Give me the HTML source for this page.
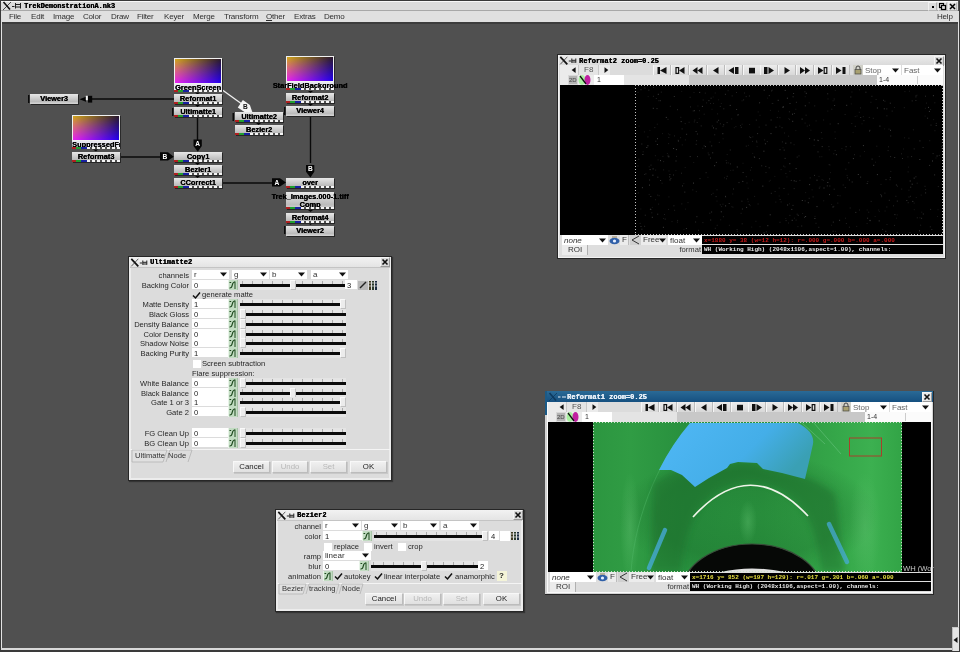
<!DOCTYPE html>
<html><head><meta charset="utf-8">
<style>
*{margin:0;padding:0;box-sizing:border-box}
html,body{width:960px;height:652px;overflow:hidden;background:#505050;font-family:"Liberation Sans",sans-serif;position:relative}
body{will-change:transform}
.a{position:absolute}
.t{position:absolute;white-space:nowrap;line-height:1}
.mono{font-family:"Liberation Mono",monospace}
/* menubar */
.mi{position:absolute;top:13px;font-size:8px;letter-spacing:-0.2px;color:#2e2e2e;line-height:8px}
/* nodes */
.node{position:absolute;width:48px;height:10px;background:linear-gradient(#e8e8e8 0%,#d0d0d0 40%,#bcbcbc 75%,#d8d8d8 100%);box-shadow:1px 1px 0 #262626;font-weight:bold;font-size:7.4px;line-height:10px;text-align:center;color:#000;white-space:nowrap;text-shadow:0.3px 0 0 #000}
.ch{position:absolute;left:0;bottom:0;width:48px;height:2px;background:
linear-gradient(to right,#b02020 0,#b02020 4px,#20a030 4px,#20a030 9px,#1820a0 9px,#1820a0 15px,transparent 15px),
repeating-linear-gradient(to right,#f4f4f4 0,#f4f4f4 3px,#505050 3px,#505050 5px)}
.thumb{position:absolute;width:48px;height:26px;border:1px solid #f0f0f0;
background:linear-gradient(to bottom,rgba(0,0,0,0),rgba(0,0,0,0)),
linear-gradient(to right,#e82020,#000 95%),
linear-gradient(to bottom,#000 0%,#0000f0 100%);background-blend-mode:normal,screen}
.thumbg{position:absolute;left:0;top:0;width:100%;height:100%;background:radial-gradient(ellipse 120% 140% at 0 0,rgba(0,200,0,1) 0%,rgba(0,0,0,0) 80%);mix-blend-mode:screen}
.lbl{position:absolute;font-weight:bold;font-size:7.4px;line-height:7px;color:#000;white-space:nowrap;text-align:center;text-shadow:0.3px 0 0 #000}
/* windows */
.win{position:absolute;background:#dcdcdc;border:1px solid #222}
.wt{position:absolute;left:0;top:0;right:0;height:10px;background:linear-gradient(#f0f0f0,#d8d8d8)}
.wtt{position:absolute;top:1px;font-family:"Liberation Mono",monospace;font-weight:bold;font-size:7.5px;line-height:8px;color:#111}
.xb{position:absolute;width:10px;height:10px;background:#d4d4d4;border:1px solid #888;color:#111;font-size:9px;line-height:8px;text-align:center;font-weight:bold}
.lab{position:absolute;font-size:8px;color:#333;line-height:8px;white-space:nowrap;text-align:right}
.inp{position:absolute;height:9px;background:#fff;font-size:8px;line-height:9px;color:#222;padding-left:1px}
.ani{position:absolute;width:8px;height:9px;background:#bfe0bf;border:1px solid #a0c0a0}
.sl{position:absolute;height:9px}
.btn{position:absolute;height:11px;background:linear-gradient(#f4f4f4,#dcdcdc);border:1px solid #bbb;border-right-color:#999;border-bottom-color:#999;font-size:8px;line-height:9px;text-align:center;color:#222}
</style></head><body>

<!-- ============ main title bar ============ -->
<div class="a" style="left:0;top:0;width:960px;height:1px;background:#3a3a3a"></div>
<div class="a" style="left:0;top:1px;width:958px;height:10px;background:#dcdcdc;border-top:1px solid #f8f8f8;border-bottom:1px solid #a8a8a8"></div>
<div class="a" style="left:0;top:0;width:1px;height:652px;background:#3a3a3a"></div>
<svg class="a" style="left:1px;top:1px" width="22" height="10" viewBox="0 0 22 10">
 <path d="M2.5 1 L9 8.5" stroke="#111" stroke-width="1.6" fill="none"/>
 <path d="M10 1 L2 9" stroke="#222" stroke-width="0.8" fill="none"/>
 <path d="M11 5.5 H13.5" stroke="#222" stroke-width="1" fill="none"/>
 <path d="M14.5 2 V7.5 M19.5 2 V7.5 M14.5 3.5 H19.5 M14.5 6 H19.5" stroke="#222" stroke-width="1" fill="none"/>
</svg>
<div class="t mono" style="left:24px;top:2px;font-size:6.9px;font-weight:bold;color:#000;line-height:9px;text-shadow:0.35px 0 0 #000">TrekDemonstrationA.nk3</div>
<div class="a" style="left:928px;top:2px;width:9px;height:9px;border:1px solid #b4b4b4;border-top-color:#f0f0f0;border-left-color:#f0f0f0;background:#dcdcdc"><div class="a" style="left:3px;top:3px;width:2px;height:2px;background:#000"></div></div>
<div class="a" style="left:938px;top:2px;width:9px;height:9px;border:1px solid #b4b4b4;border-top-color:#f0f0f0;border-left-color:#f0f0f0;background:#dcdcdc"></div><svg class="a" style="left:938px;top:2px" width="9" height="9"><rect x="1.5" y="1.5" width="4" height="4" fill="none" stroke="#000" stroke-width="1.2"/><rect x="3.5" y="3.5" width="4" height="4" fill="#dcdcdc" stroke="#000" stroke-width="1.2"/></svg>
<div class="a" style="left:948px;top:2px;width:9px;height:9px;border:1px solid #b4b4b4;border-top-color:#f0f0f0;border-left-color:#f0f0f0;background:#dcdcdc"></div><svg class="a" style="left:948px;top:2px" width="9" height="9"><path d="M2 2 L7 7 M7 2 L2 7" stroke="#000" stroke-width="1.5"/></svg>

<!-- ============ menubar ============ -->
<div class="a" style="left:1px;top:11px;width:957px;height:11px;background:#e0e0e0"></div>
<div class="mi" style="left:9px">File</div>
<div class="mi" style="left:31px">Edit</div>
<div class="mi" style="left:53px">Image</div>
<div class="mi" style="left:83px">Color</div>
<div class="mi" style="left:111px">Draw</div>
<div class="mi" style="left:137px">Filter</div>
<div class="mi" style="left:164px">Keyer</div>
<div class="mi" style="left:193px">Merge</div>
<div class="mi" style="left:224px">Transform</div>
<div class="mi" style="left:266px"><u>O</u>ther</div>
<div class="mi" style="left:294px">Extras</div>
<div class="mi" style="left:324px">Demo</div>
<div class="mi" style="left:937px">Help</div>

<div class="a" style="left:2px;top:22px;width:956px;height:2px;background:#3c3c3c"></div>
<!-- right & bottom frame -->
<div class="a" style="left:1px;top:22px;width:1px;height:628px;background:#e4e4e4"></div>
<div class="a" style="left:958px;top:11px;width:1px;height:641px;background:#e0e0e0"></div>
<div class="a" style="left:959px;top:0;width:1px;height:652px;background:#3a3a3a"></div>
<div class="a" style="left:1px;top:648px;width:958px;height:2px;background:#d8d8d8"></div>
<div class="a" style="left:0;top:650px;width:960px;height:2px;background:#3a3a3a"></div>
<div class="a" style="left:952px;top:627px;width:7px;height:24px;background:#e4e4e4;border-left:1px solid #bbb;border-top:1px solid #c8c8c8"></div>
<svg class="a" style="left:952px;top:636px" width="7" height="8"><path d="M1.5 4 L5.5 1 V7Z" fill="#111"/></svg>


<!-- ============ node graph ============ -->
<svg class="a" style="left:0;top:0" width="0" height="0">
<defs>
 <linearGradient id="tgt" x1="0" x2="1"><stop offset="0" stop-color="#d0a818"/><stop offset="1" stop-color="#281828"/></linearGradient>
 <linearGradient id="tgb" x1="0" x2="1"><stop offset="0" stop-color="#e820f0"/><stop offset="1" stop-color="#2000f0"/></linearGradient>
 <linearGradient id="tgm" x1="0" y1="0" x2="0" y2="1"><stop offset="0" stop-color="#fff"/><stop offset="1" stop-color="#000"/></linearGradient>
 <mask id="tmask"><rect width="48" height="26" fill="url(#tgm)"/></mask>
</defs></svg>
<svg class="a" style="left:0;top:0" width="960" height="652">
 <g stroke="#0a0a0a" stroke-width="1.4" fill="none">
  <path d="M92 99 H174"/>
  <path d="M197.5 118 V140"/>
  <path d="M121 157 H161"/>
  <path d="M223 183 H272"/>
  <path d="M310.5 117 V163"/>
 </g>
 <path d="M221 89 L246 107" stroke="#f0f0f0" stroke-width="1.3" fill="none"/>
 <g fill="#050505">
  <path d="M79.5 99.3 L86 96.8 V101.8 Z"/>
  <rect x="88" y="95.8" width="4.2" height="6.8"/>
  <path d="M160 152.3 H168 L173.8 156.8 L168 160.5 H160 Z"/>
  <path d="M272 178.3 H280 L286 182.5 L280 186.6 H272 Z"/>
  <path d="M306 165 H314.3 V171.7 L310.4 177.4 L306 171.7 Z"/>
  <path d="M193.5 139.5 H201.8 V146 L197.8 151.8 L193.5 146 Z"/>
 </g>
 <rect x="85.8" y="95.8" width="2" height="4.4" fill="#f4f4f4"/>
 <g transform="translate(252.3 112) rotate(34.4)"><path d="M-14.5 -4.5 H-6 L0 0 L-6 4.5 H-14.5 Z" fill="#f4f4f4"/></g>
 <g fill="#fff" font-family="Liberation Sans" font-weight="bold" font-size="6.6">
  <text x="165" y="158.6" text-anchor="middle">B</text>
  <text x="197.6" y="145.5" text-anchor="middle">A</text>
  <text x="277" y="184.6" text-anchor="middle">A</text>
  <text x="310.3" y="171.2" text-anchor="middle">B</text>
  <text x="245.3" y="109.2" text-anchor="middle" fill="#111">B</text>
 </g>
 <g fill="#0a0a0a">
  <rect x="28" y="95" width="1.5" height="8"/>
  <rect x="172" y="108" width="1.5" height="8"/>
  <rect x="232.5" y="113" width="1.5" height="8"/>
  <rect x="284" y="107" width="1.5" height="8"/>
  <rect x="284" y="226" width="1.5" height="8"/>
 </g>
 <g fill="#050505">
  <path d="M195 92.5 H200 L197.5 94.5Z M195 105 H200 L197.5 107Z M195 163 H200 L197.5 165Z M195 176 H200 L197.5 178Z"/>
  <path d="M93 149.5 H98 L96 151.5Z"/>
  <path d="M256 123 H261 L258.5 125Z"/>
  <path d="M308 91 H313 L310.5 93Z M308 104 H313 L310.5 106Z"/>
  <path d="M308 210 H313 L310.5 212Z M308 223 H313 L310.5 225Z"/>
 </g>
</svg>
<div class="node" style="left:30px;top:94px;height:10px">Viewer3</div><div class="a" style="left:174px;top:58px;width:48px;height:26px;background:#f0f0f0;box-shadow:1px 1px 0 #2a2a2a"></div><svg class="a" style="left:175px;top:59px" width="46" height="24" viewBox="0 0 48 26" preserveAspectRatio="none"><rect width="48" height="26" fill="url(#tgb)"/><rect width="48" height="26" fill="url(#tgt)" mask="url(#tmask)"/></svg><div class="a" style="left:174px;top:84px;width:48px;height:7px;background:#e8e8f0;box-shadow:1px 1px 0 #2a2a2a"></div><div class="lbl" style="left:174px;top:84px;width:48px;overflow:visible">GreenScreen</div><div class="ch" style="left:174px;top:90px;bottom:auto"></div><div class="node" style="left:174px;top:94px;height:10px">Reformat1<div class="ch"></div></div><div class="node" style="left:174px;top:107px;height:10px">Ultimatte1<div class="ch"></div></div><div class="node" style="left:174px;top:152px;height:10px">Copy1<div class="ch"></div></div><div class="node" style="left:174px;top:165px;height:10px">Bezier1<div class="ch"></div></div><div class="node" style="left:174px;top:178px;height:10px">CCorrect1<div class="ch"></div></div><div class="a" style="left:72px;top:115px;width:48px;height:26px;background:#f0f0f0;box-shadow:1px 1px 0 #2a2a2a"></div><svg class="a" style="left:73px;top:116px" width="46" height="24" viewBox="0 0 48 26" preserveAspectRatio="none"><rect width="48" height="26" fill="url(#tgb)"/><rect width="48" height="26" fill="url(#tgt)" mask="url(#tmask)"/></svg><div class="a" style="left:72px;top:141px;width:48px;height:7px;background:#e8e8f0;box-shadow:1px 1px 0 #2a2a2a"></div><div class="lbl" style="left:72px;top:141px;width:48px;overflow:visible"><span style="display:inline-block;width:48px;overflow:hidden">SuppressedFr</span></div><div class="ch" style="left:72px;top:147px;bottom:auto"></div><div class="node" style="left:72px;top:152px;height:10px">Reformat3<div class="ch"></div></div><div class="node" style="left:235px;top:112px;height:10px">Ultimatte2<div class="ch"></div></div><div class="node" style="left:235px;top:125px;height:10px">Bezier2<div class="ch"></div></div><div class="a" style="left:286px;top:56px;width:48px;height:26px;background:#f0f0f0;box-shadow:1px 1px 0 #2a2a2a"></div><svg class="a" style="left:287px;top:57px" width="46" height="24" viewBox="0 0 48 26" preserveAspectRatio="none"><rect width="48" height="26" fill="url(#tgb)"/><rect width="48" height="26" fill="url(#tgt)" mask="url(#tmask)"/></svg><div class="a" style="left:286px;top:82px;width:48px;height:7px;background:#e8e8f0;box-shadow:1px 1px 0 #2a2a2a"></div><div class="lbl" style="left:266px;top:82px;width:88px;overflow:visible">StarFieldBackground</div><div class="ch" style="left:286px;top:88px;bottom:auto"></div><div class="node" style="left:286px;top:93px;height:10px">Reformat2<div class="ch"></div></div><div class="node" style="left:286px;top:106px;height:10px">Viewer4</div><div class="node" style="left:286px;top:178px;height:10px">over<div class="ch"></div></div><div class="node" style="left:286px;top:192px;height:17px;padding-top:8px">Comp<div class="ch"></div></div><div class="lbl" style="left:262px;top:193px;width:96px">Trek_Images.000-1.tiff</div><div class="node" style="left:286px;top:213px;height:10px">Reformat4<div class="ch"></div></div><div class="node" style="left:286px;top:226px;height:10px">Viewer2</div>
<!-- ============ Reformat2 viewer ============ -->
<div class="a" style="left:557px;top:54px;width:389px;height:205px;background:#262626"></div><div class="a" style="left:558px;top:55px;width:387px;height:203px;background:#f2f2f2"></div><div class="a" style="left:559px;top:55px;width:386px;height:10px;background:linear-gradient(#ececec,#dadada)"></div><div class="a" style="left:559px;top:65px;width:385px;height:192px;background:#dedede"></div><svg class="a" style="left:559px;top:56px" width="22" height="10" viewBox="0 0 22 10"><path d="M1.3 0.8 L8.3 8.3" stroke="#111" stroke-width="1.7" fill="none"/><path d="M8.3 0.8 L1.3 8.3" stroke="#222" stroke-width="0.7" fill="none"/><path d="M9.8 5 H12" stroke="#222" stroke-width="1" fill="none"/><path d="M12.8 2.5 V6.8 M16.8 2.5 V6.8 M12.8 4.3 H16.8 M12.8 6 H16.8" stroke="#222" stroke-width="1" fill="none"/></svg><div class="t mono" style="left:579px;top:57px;font-size:7px;font-weight:bold;line-height:9px;color:#000;text-shadow:0.35px 0 0 #000">Reformat2 zoom=0.25</div><div class="a" style="left:934px;top:56px;width:10px;height:10px;background:#d8d8d8;border:1px solid #999;border-top-color:#f4f4f4;border-left-color:#f4f4f4"></div>
<svg class="a" style="left:934px;top:56px" width="10" height="10"><path d="M2.5 2.5 L7.5 7.5 M7.5 2.5 L2.5 7.5" stroke="#111" stroke-width="1.6"/></svg><div class="a" style="left:560px;top:65px;width:383px;height:20px;background:#dcdcdc"></div><div class="a" style="left:560px;top:65px;width:50px;height:20px;background:#ebebeb"></div><svg class="a" style="left:568px;top:66px" width="12" height="9"><path d="M3.6 4.1 L7.6 1.2 V7Z" fill="#111"/></svg><div class="a" style="left:578px;top:65px;width:21px;height:10px;background:#e4e4e4;border-left:1px solid #c8c8c8;border-right:1px solid #c8c8c8"></div><div class="t" style="left:584px;top:66px;font-size:8px;line-height:8px;color:#555">F8</div><svg class="a" style="left:600px;top:66px" width="11" height="9"><path d="M4.5 1.2 V7 L8.3 4.1Z" fill="#111"/></svg><div class="a" style="left:653px;top:65px;width:18px;height:10px;background:linear-gradient(#ececec,#d8d8d8);border-right:1px solid #bcbcbc;border-left:1px solid #f6f6f6"></div><svg class="a" style="left:656px;top:66px" width="12" height="9"><path d="M1.5 1 H4 V8 H1.5Z M4 4.5 L10.5 1 V8Z" fill="#111"/></svg><div class="a" style="left:671px;top:65px;width:18px;height:10px;background:linear-gradient(#ececec,#d8d8d8);border-right:1px solid #bcbcbc;border-left:1px solid #f6f6f6"></div><svg class="a" style="left:674px;top:66px" width="12" height="9"><rect x="2" y="1.6" width="2.6" height="5.8" fill="none" stroke="#111" stroke-width="1.2"/><path d="M5 4.5 L10.5 1 V8Z" fill="#111"/></svg><div class="a" style="left:689px;top:65px;width:18px;height:10px;background:linear-gradient(#ececec,#d8d8d8);border-right:1px solid #bcbcbc;border-left:1px solid #f6f6f6"></div><svg class="a" style="left:692px;top:66px" width="12" height="9"><path d="M0.5 4.5 L5.5 1 V8Z M5.5 4.5 L10.5 1 V8Z" fill="#111"/></svg><div class="a" style="left:707px;top:65px;width:18px;height:10px;background:linear-gradient(#ececec,#d8d8d8);border-right:1px solid #bcbcbc;border-left:1px solid #f6f6f6"></div><svg class="a" style="left:710px;top:66px" width="12" height="9"><path d="M3 4.5 L8.5 1 V8Z" fill="#111"/></svg><div class="a" style="left:725px;top:65px;width:18px;height:10px;background:linear-gradient(#ececec,#d8d8d8);border-right:1px solid #bcbcbc;border-left:1px solid #f6f6f6"></div><svg class="a" style="left:728px;top:66px" width="12" height="9"><path d="M0.5 4.5 L6 1 V8Z M7 1 H10.5 V8 H7Z" fill="#111"/></svg><div class="a" style="left:743px;top:65px;width:18px;height:10px;background:linear-gradient(#ececec,#d8d8d8);border-right:1px solid #bcbcbc;border-left:1px solid #f6f6f6"></div><svg class="a" style="left:746px;top:66px" width="12" height="9"><rect x="3" y="1.8" width="6" height="5.6" fill="#111"/></svg><div class="a" style="left:760px;top:65px;width:18px;height:10px;background:linear-gradient(#ececec,#d8d8d8);border-right:1px solid #bcbcbc;border-left:1px solid #f6f6f6"></div><svg class="a" style="left:763px;top:66px" width="12" height="9"><path d="M1 1 H4.5 V8 H1Z M5.5 1 L11 4.5 L5.5 8Z" fill="#111"/></svg><div class="a" style="left:778px;top:65px;width:18px;height:10px;background:linear-gradient(#ececec,#d8d8d8);border-right:1px solid #bcbcbc;border-left:1px solid #f6f6f6"></div><svg class="a" style="left:781px;top:66px" width="12" height="9"><path d="M3.5 1 L9 4.5 L3.5 8Z" fill="#111"/></svg><div class="a" style="left:796px;top:65px;width:18px;height:10px;background:linear-gradient(#ececec,#d8d8d8);border-right:1px solid #bcbcbc;border-left:1px solid #f6f6f6"></div><svg class="a" style="left:799px;top:66px" width="12" height="9"><path d="M1 1 L6 4.5 L1 8Z M6 1 L11 4.5 L6 8Z" fill="#111"/></svg><div class="a" style="left:814px;top:65px;width:18px;height:10px;background:linear-gradient(#ececec,#d8d8d8);border-right:1px solid #bcbcbc;border-left:1px solid #f6f6f6"></div><svg class="a" style="left:817px;top:66px" width="12" height="9"><path d="M1 1 L6.5 4.5 L1 8Z" fill="#111"/><rect x="7.2" y="1.6" width="2.6" height="5.8" fill="none" stroke="#111" stroke-width="1.2"/></svg><div class="a" style="left:832px;top:65px;width:18px;height:10px;background:linear-gradient(#ececec,#d8d8d8);border-right:1px solid #bcbcbc;border-left:1px solid #f6f6f6"></div><svg class="a" style="left:835px;top:66px" width="12" height="9"><path d="M1 1 L6.5 4.5 L1 8Z M7.5 1 H10.5 V8 H7.5Z" fill="#111"/></svg><div class="a" style="left:853px;top:65px;width:10px;height:10px;background:#d0d0c8"></div><svg class="a" style="left:853px;top:65px" width="10" height="10"><path d="M3 4.5 V3 A2 2 0 0 1 7 3 V4.5" stroke="#444" stroke-width="1" fill="none"/><rect x="2" y="4.5" width="6" height="4.5" fill="#a8a070" stroke="#444" stroke-width="0.7"/></svg><div class="a" style="left:863px;top:65px;width:38px;height:10px;background:#fff"></div>
<div class="t" style="left:865px;top:66px;font-size:8px;line-height:9px;color:#333;"><span style="color:#666">Stop</span></div>
<svg class="a" style="left:892px;top:68px" width="7" height="5"><path d="M0 0.5 H7 L3.5 4.5Z" fill="#111"/></svg><div class="a" style="left:902px;top:65px;width:41px;height:10px;background:#fff"></div>
<div class="t" style="left:904px;top:66px;font-size:8px;line-height:9px;color:#333;"><span style="color:#666">Fast</span></div>
<svg class="a" style="left:934px;top:68px" width="7" height="5"><path d="M0 0.5 H7 L3.5 4.5Z" fill="#111"/></svg><div class="a" style="left:568px;top:75px;width:10px;height:10px;background:#b4b4b4;border:1px solid #d8d8d8"></div><div class="t" style="left:569px;top:77px;font-size:6px;line-height:6px;color:#444">2D</div><svg class="a" style="left:578px;top:75px" width="14" height="11"><ellipse cx="4" cy="5" rx="3.5" ry="5" fill="#a8f0a0"/><ellipse cx="9.5" cy="5" rx="3" ry="5" fill="#c020a0"/><path d="M2 1 L8 9" stroke="#111" stroke-width="1.3"/></svg><div class="a" style="left:594px;top:75px;width:30px;height:10px;background:#fff"></div><div class="t" style="left:597px;top:76px;font-size:7px;line-height:8px;color:#333">1</div><div class="a" style="left:624px;top:75px;width:65px;height:10px;background:#e4e4e4"></div><div class="a" style="left:689px;top:75px;width:188px;height:10px;background:#c8c8c8"></div><div class="a" style="left:877px;top:75px;width:66px;height:10px;background:#fbfbfb"></div><div class="a" style="left:917px;top:76px;width:1px;height:8px;background:#ccc"></div><div class="t" style="left:879px;top:76px;font-size:7px;line-height:8px;color:#333">1-4</div><div class="a" style="left:560px;top:85px;width:383px;height:150px;background:#000"></div><div class="a" style="left:560px;top:235px;width:383px;height:20px;background:#dedede"></div><div class="a" style="left:562px;top:235px;width:46px;height:10px;background:#fff"></div>
<div class="t" style="left:564px;top:236px;font-size:8px;line-height:9px;color:#333;font-style:italic;">none</div>
<svg class="a" style="left:599px;top:238px" width="7" height="5"><path d="M0 0.5 H7 L3.5 4.5Z" fill="#111"/></svg><svg class="a" style="left:609px;top:235px" width="11" height="10"><ellipse cx="5.5" cy="6" rx="5" ry="3.2" fill="#3060a8"/><circle cx="5.5" cy="6" r="1.6" fill="#e8f0ff"/><path d="M3 2 L8 2" stroke="#a09070" stroke-width="1.2"/></svg><div class="a" style="left:620px;top:235px;width:9px;height:10px;background:#ececec;border-right:1px solid #bbb"></div><div class="t" style="left:622px;top:236px;font-size:8px;line-height:8px;color:#333">F</div><div class="a" style="left:630px;top:235px;width:11px;height:10px;background:#d0d0d0"></div><svg class="a" style="left:630px;top:235px" width="11" height="10"><path d="M9 1 L2 5 L9 9" stroke="#333" stroke-width="1" fill="none"/></svg><div class="a" style="left:641px;top:235px;width:25px;height:10px;background:#ececec"></div><div class="t" style="left:643px;top:236px;font-size:8px;line-height:8px;color:#333">Free</div><svg class="a" style="left:659px;top:238px" width="7" height="5"><path d="M0 0.5 H7 L3.5 4.5Z" fill="#111"/></svg><div class="a" style="left:668px;top:235px;width:34px;height:10px;background:#fff"></div>
<div class="t" style="left:670px;top:236px;font-size:8px;line-height:9px;color:#333;">float</div>
<svg class="a" style="left:693px;top:238px" width="7" height="5"><path d="M0 0.5 H7 L3.5 4.5Z" fill="#111"/></svg><div class="a" style="left:702px;top:236px;width:241px;height:8px;background:#000"></div><div class="t mono" style="left:704px;top:237px;font-size:6px;line-height:7px;color:#c81818;font-weight:bold">x=1880 y=  38 (w=12 h=12): r=.000 g=.000 b=.000 a=.000</div><div class="a" style="left:562px;top:245px;width:26px;height:10px;background:#ececec;border-right:1px solid #b0b0b0"></div><div class="t" style="left:562px;top:246px;width:26px;text-align:center;font-size:8px;line-height:8px;color:#333">ROI</div><div class="t" style="right:259px;top:246px;font-size:7.6px;line-height:8px;color:#333">format</div><div class="a" style="left:702px;top:245px;width:241px;height:9px;background:#000"></div><div class="t mono" style="left:704px;top:246px;font-size:6px;line-height:7px;color:#e8e8e8;font-weight:bold">WH (Working High) (2048x1106,aspect=1.00), channels:</div><div class="a" style="left:635px;top:85px;width:1px;height:150px;background:repeating-linear-gradient(#c0c0c0 0,#c0c0c0 1px,transparent 1px,transparent 3px)"></div><div class="a" style="left:942px;top:85px;width:1px;height:150px;background:repeating-linear-gradient(#c0c0c0 0,#c0c0c0 1px,transparent 1px,transparent 3px)"></div><div class="a" style="left:635px;top:85px;width:308px;height:1px;background:repeating-linear-gradient(to right,#c0c0c0 0,#c0c0c0 1px,transparent 1px,transparent 3px)"></div><div class="a" style="left:635px;top:234px;width:308px;height:1px;background:repeating-linear-gradient(to right,#c0c0c0 0,#c0c0c0 1px,transparent 1px,transparent 3px)"></div>
<!-- ============ Reformat1 viewer ============ -->
<div class="a" style="left:545px;top:391px;width:389px;height:204px;background:#262626"></div><div class="a" style="left:545px;top:392px;width:388px;height:202px;background:#d4d4d4"></div><div class="a" style="left:547px;top:401px;width:385px;height:192px;background:#fafafa"></div><div class="a" style="left:545px;top:391px;width:388px;height:11px;background:linear-gradient(#2a6a96,#165080)"></div><div class="a" style="left:545px;top:391px;width:2px;height:24px;background:#1c5a86"></div><svg class="a" style="left:547px;top:392px" width="22" height="10" viewBox="0 0 22 10"><path d="M2.5 1 L9 8.5" stroke="#0e3a5e" stroke-width="1.6" fill="none"/><path d="M10 1 L2 9" stroke="#0e3a5e" stroke-width="0.8" fill="none"/><path d="M11 5 H13.5 M15 5 H19" stroke="#e8f0f8" stroke-width="1" fill="none"/></svg><div class="t mono" style="left:567px;top:393px;font-size:7px;font-weight:bold;line-height:9px;color:#e8f0f8;text-shadow:0.35px 0 0 #e8f0f8">Reformat1 zoom=0.25</div><div class="a" style="left:922px;top:392px;width:10px;height:10px;background:#e8e8e8;border:1px solid #999;border-top-color:#f4f4f4;border-left-color:#f4f4f4"></div>
<svg class="a" style="left:922px;top:392px" width="10" height="10"><path d="M2.5 2.5 L7.5 7.5 M7.5 2.5 L2.5 7.5" stroke="#111" stroke-width="1.6"/></svg><div class="a" style="left:548px;top:402px;width:383px;height:20px;background:#dcdcdc"></div><div class="a" style="left:548px;top:402px;width:50px;height:20px;background:#ebebeb"></div><svg class="a" style="left:556px;top:403px" width="12" height="9"><path d="M3.6 4.1 L7.6 1.2 V7Z" fill="#111"/></svg><div class="a" style="left:566px;top:402px;width:21px;height:10px;background:#e4e4e4;border-left:1px solid #c8c8c8;border-right:1px solid #c8c8c8"></div><div class="t" style="left:572px;top:403px;font-size:8px;line-height:8px;color:#555">F8</div><svg class="a" style="left:588px;top:403px" width="11" height="9"><path d="M4.5 1.2 V7 L8.3 4.1Z" fill="#111"/></svg><div class="a" style="left:641px;top:402px;width:18px;height:10px;background:linear-gradient(#ececec,#d8d8d8);border-right:1px solid #bcbcbc;border-left:1px solid #f6f6f6"></div><svg class="a" style="left:644px;top:403px" width="12" height="9"><path d="M1.5 1 H4 V8 H1.5Z M4 4.5 L10.5 1 V8Z" fill="#111"/></svg><div class="a" style="left:659px;top:402px;width:18px;height:10px;background:linear-gradient(#ececec,#d8d8d8);border-right:1px solid #bcbcbc;border-left:1px solid #f6f6f6"></div><svg class="a" style="left:662px;top:403px" width="12" height="9"><rect x="2" y="1.6" width="2.6" height="5.8" fill="none" stroke="#111" stroke-width="1.2"/><path d="M5 4.5 L10.5 1 V8Z" fill="#111"/></svg><div class="a" style="left:677px;top:402px;width:18px;height:10px;background:linear-gradient(#ececec,#d8d8d8);border-right:1px solid #bcbcbc;border-left:1px solid #f6f6f6"></div><svg class="a" style="left:680px;top:403px" width="12" height="9"><path d="M0.5 4.5 L5.5 1 V8Z M5.5 4.5 L10.5 1 V8Z" fill="#111"/></svg><div class="a" style="left:695px;top:402px;width:18px;height:10px;background:linear-gradient(#ececec,#d8d8d8);border-right:1px solid #bcbcbc;border-left:1px solid #f6f6f6"></div><svg class="a" style="left:698px;top:403px" width="12" height="9"><path d="M3 4.5 L8.5 1 V8Z" fill="#111"/></svg><div class="a" style="left:713px;top:402px;width:18px;height:10px;background:linear-gradient(#ececec,#d8d8d8);border-right:1px solid #bcbcbc;border-left:1px solid #f6f6f6"></div><svg class="a" style="left:716px;top:403px" width="12" height="9"><path d="M0.5 4.5 L6 1 V8Z M7 1 H10.5 V8 H7Z" fill="#111"/></svg><div class="a" style="left:731px;top:402px;width:18px;height:10px;background:linear-gradient(#ececec,#d8d8d8);border-right:1px solid #bcbcbc;border-left:1px solid #f6f6f6"></div><svg class="a" style="left:734px;top:403px" width="12" height="9"><rect x="3" y="1.8" width="6" height="5.6" fill="#111"/></svg><div class="a" style="left:748px;top:402px;width:18px;height:10px;background:linear-gradient(#ececec,#d8d8d8);border-right:1px solid #bcbcbc;border-left:1px solid #f6f6f6"></div><svg class="a" style="left:751px;top:403px" width="12" height="9"><path d="M1 1 H4.5 V8 H1Z M5.5 1 L11 4.5 L5.5 8Z" fill="#111"/></svg><div class="a" style="left:766px;top:402px;width:18px;height:10px;background:linear-gradient(#ececec,#d8d8d8);border-right:1px solid #bcbcbc;border-left:1px solid #f6f6f6"></div><svg class="a" style="left:769px;top:403px" width="12" height="9"><path d="M3.5 1 L9 4.5 L3.5 8Z" fill="#111"/></svg><div class="a" style="left:784px;top:402px;width:18px;height:10px;background:linear-gradient(#ececec,#d8d8d8);border-right:1px solid #bcbcbc;border-left:1px solid #f6f6f6"></div><svg class="a" style="left:787px;top:403px" width="12" height="9"><path d="M1 1 L6 4.5 L1 8Z M6 1 L11 4.5 L6 8Z" fill="#111"/></svg><div class="a" style="left:802px;top:402px;width:18px;height:10px;background:linear-gradient(#ececec,#d8d8d8);border-right:1px solid #bcbcbc;border-left:1px solid #f6f6f6"></div><svg class="a" style="left:805px;top:403px" width="12" height="9"><path d="M1 1 L6.5 4.5 L1 8Z" fill="#111"/><rect x="7.2" y="1.6" width="2.6" height="5.8" fill="none" stroke="#111" stroke-width="1.2"/></svg><div class="a" style="left:820px;top:402px;width:18px;height:10px;background:linear-gradient(#ececec,#d8d8d8);border-right:1px solid #bcbcbc;border-left:1px solid #f6f6f6"></div><svg class="a" style="left:823px;top:403px" width="12" height="9"><path d="M1 1 L6.5 4.5 L1 8Z M7.5 1 H10.5 V8 H7.5Z" fill="#111"/></svg><div class="a" style="left:841px;top:402px;width:10px;height:10px;background:#d0d0c8"></div><svg class="a" style="left:841px;top:402px" width="10" height="10"><path d="M3 4.5 V3 A2 2 0 0 1 7 3 V4.5" stroke="#444" stroke-width="1" fill="none"/><rect x="2" y="4.5" width="6" height="4.5" fill="#a8a070" stroke="#444" stroke-width="0.7"/></svg><div class="a" style="left:851px;top:402px;width:38px;height:10px;background:#fff"></div>
<div class="t" style="left:853px;top:403px;font-size:8px;line-height:9px;color:#333;"><span style="color:#666">Stop</span></div>
<svg class="a" style="left:880px;top:405px" width="7" height="5"><path d="M0 0.5 H7 L3.5 4.5Z" fill="#111"/></svg><div class="a" style="left:890px;top:402px;width:41px;height:10px;background:#fff"></div>
<div class="t" style="left:892px;top:403px;font-size:8px;line-height:9px;color:#333;"><span style="color:#666">Fast</span></div>
<svg class="a" style="left:922px;top:405px" width="7" height="5"><path d="M0 0.5 H7 L3.5 4.5Z" fill="#111"/></svg><div class="a" style="left:556px;top:412px;width:10px;height:10px;background:#b4b4b4;border:1px solid #d8d8d8"></div><div class="t" style="left:557px;top:414px;font-size:6px;line-height:6px;color:#444">2D</div><svg class="a" style="left:566px;top:412px" width="14" height="11"><ellipse cx="4" cy="5" rx="3.5" ry="5" fill="#a8f0a0"/><ellipse cx="9.5" cy="5" rx="3" ry="5" fill="#c020a0"/><path d="M2 1 L8 9" stroke="#111" stroke-width="1.3"/></svg><div class="a" style="left:582px;top:412px;width:30px;height:10px;background:#fff"></div><div class="t" style="left:585px;top:413px;font-size:7px;line-height:8px;color:#333">1</div><div class="a" style="left:612px;top:412px;width:65px;height:10px;background:#e4e4e4"></div><div class="a" style="left:677px;top:412px;width:188px;height:10px;background:#c8c8c8"></div><div class="a" style="left:865px;top:412px;width:66px;height:10px;background:#fbfbfb"></div><div class="a" style="left:905px;top:413px;width:1px;height:8px;background:#ccc"></div><div class="t" style="left:867px;top:413px;font-size:7px;line-height:8px;color:#333">1-4</div><div class="a" style="left:548px;top:422px;width:383px;height:150px;background:#000"></div><div class="a" style="left:548px;top:572px;width:383px;height:20px;background:#dedede"></div><div class="a" style="left:550px;top:572px;width:46px;height:10px;background:#fff"></div>
<div class="t" style="left:552px;top:573px;font-size:8px;line-height:9px;color:#333;font-style:italic;">none</div>
<svg class="a" style="left:587px;top:575px" width="7" height="5"><path d="M0 0.5 H7 L3.5 4.5Z" fill="#111"/></svg><svg class="a" style="left:597px;top:572px" width="11" height="10"><ellipse cx="5.5" cy="6" rx="5" ry="3.2" fill="#3060a8"/><circle cx="5.5" cy="6" r="1.6" fill="#e8f0ff"/><path d="M3 2 L8 2" stroke="#a09070" stroke-width="1.2"/></svg><div class="a" style="left:608px;top:572px;width:9px;height:10px;background:#ececec;border-right:1px solid #bbb"></div><div class="t" style="left:610px;top:573px;font-size:8px;line-height:8px;color:#333">F</div><div class="a" style="left:618px;top:572px;width:11px;height:10px;background:#d0d0d0"></div><svg class="a" style="left:618px;top:572px" width="11" height="10"><path d="M9 1 L2 5 L9 9" stroke="#333" stroke-width="1" fill="none"/></svg><div class="a" style="left:629px;top:572px;width:25px;height:10px;background:#ececec"></div><div class="t" style="left:631px;top:573px;font-size:8px;line-height:8px;color:#333">Free</div><svg class="a" style="left:647px;top:575px" width="7" height="5"><path d="M0 0.5 H7 L3.5 4.5Z" fill="#111"/></svg><div class="a" style="left:656px;top:572px;width:34px;height:10px;background:#fff"></div>
<div class="t" style="left:658px;top:573px;font-size:8px;line-height:9px;color:#333;">float</div>
<svg class="a" style="left:681px;top:575px" width="7" height="5"><path d="M0 0.5 H7 L3.5 4.5Z" fill="#111"/></svg><div class="a" style="left:690px;top:573px;width:241px;height:8px;background:#000"></div><div class="t mono" style="left:692px;top:574px;font-size:6px;line-height:7px;color:#e8e040;font-weight:bold">x=1716 y= 852 (w=197 h=129): r=.017 g=.301 b=.060 a=.000</div><div class="a" style="left:550px;top:582px;width:26px;height:10px;background:#ececec;border-right:1px solid #b0b0b0"></div><div class="t" style="left:550px;top:583px;width:26px;text-align:center;font-size:8px;line-height:8px;color:#333">ROI</div><div class="t" style="right:271px;top:583px;font-size:7.6px;line-height:8px;color:#333">format</div><div class="a" style="left:690px;top:582px;width:241px;height:9px;background:#000"></div><div class="t mono" style="left:692px;top:583px;font-size:6px;line-height:7px;color:#e8e8e8;font-weight:bold">WH (Working High) (2048x1106,aspect=1.00), channels:</div><svg class="a" style="left:593px;top:422px" width="309" height="150" viewBox="0 0 309 150">
<defs>
 <linearGradient id="gbase" x1="0" x2="1"><stop offset="0" stop-color="#2c9640"/><stop offset="0.12" stop-color="#309c44"/><stop offset="0.3" stop-color="#28903e"/><stop offset="0.55" stop-color="#2a923e"/><stop offset="0.8" stop-color="#36a84a"/><stop offset="0.9" stop-color="#3cb050"/><stop offset="1" stop-color="#32a446"/></linearGradient>
 <linearGradient id="gblue" x1="0" y1="0" x2="1" y2="0.4"><stop offset="0" stop-color="#50b8f6"/><stop offset="0.65" stop-color="#44aee8"/><stop offset="1" stop-color="#3aa0b4"/></linearGradient>
 <radialGradient id="tun" cx="0.5" cy="0.62" r="0.42"><stop offset="0" stop-color="#1a6a2a" stop-opacity="0.1"/><stop offset="0.7" stop-color="#1a6a2a" stop-opacity="0.3"/><stop offset="1" stop-color="#1a6a2a" stop-opacity="0"/></radialGradient>
 <radialGradient id="glow"><stop offset="0" stop-color="#60c070" stop-opacity="0.4"/><stop offset="1" stop-color="#60c070" stop-opacity="0"/></radialGradient>
</defs>
<rect width="309" height="150" fill="url(#gbase)"/>
<rect width="309" height="150" fill="url(#tun)"/>
<ellipse cx="37" cy="105" rx="10" ry="55" fill="url(#glow)"/>
<ellipse cx="272" cy="105" rx="16" ry="55" fill="url(#glow)"/>
<ellipse cx="155" cy="100" rx="9" ry="22" fill="url(#glow)"/>
<path d="M38 150 C 42 90, 70 30, 100 0" stroke="#50b868" stroke-width="0.8" fill="none" opacity="0.6"/>
<path d="M208 0 L232 22 M220 0 L248 32" stroke="#70c888" stroke-width="0.9" opacity="0.55"/>
<filter id="bl3" x="-20%" y="-20%" width="140%" height="140%"><feGaussianBlur stdDeviation="3"/></filter>
<path d="M58 150 L60 62 Q90 40 137 42 L145 40 L164 41 L170 47 Q215 50 242 72 L252 150 L228 150 Q222 64 157 60 Q95 62 88 150 Z" fill="#1a6a2c" opacity="0.45" filter="url(#bl3)"/>
<path d="M97 1 L205 1 Q222 10 220 22 Q216 40 212 57 L189 51 L170 47 L164 41 L145 40 L137 42 L134 46 L116 56 L102 65 L89 53 L78 48 L66 48 Q79 22 97 1 Z" fill="url(#gblue)"/>
<path d="M100 95 Q157 32 215 94" stroke="#eef4e8" stroke-width="1.7" fill="none"/>
<ellipse cx="159" cy="170" rx="70" ry="48" fill="#060806" stroke="#3a4a3a" stroke-width="1.2"/>
<path d="M128 150 Q 158 143 192 150Z" fill="#e0e0e0"/>
<path d="M56 146 L72 108" stroke="#48ace0" stroke-width="4.5" opacity="0.75" stroke-linecap="round"/>
<path d="M236 102 L254 140" stroke="#48ace0" stroke-width="4.5" opacity="0.7" stroke-linecap="round"/>
<rect x="256.5" y="16" width="32" height="18" fill="none" stroke="#a8402a" stroke-width="1"/>
</svg><div class="a" style="left:593px;top:422px;width:1px;height:150px;background:repeating-linear-gradient(#c8e0c8 0,#c8e0c8 1px,transparent 1px,transparent 3px)"></div><div class="a" style="left:901px;top:422px;width:1px;height:150px;background:repeating-linear-gradient(#c8e0c8 0,#c8e0c8 1px,transparent 1px,transparent 3px)"></div><div class="a" style="left:593px;top:422px;width:309px;height:1px;background:repeating-linear-gradient(to right,#c8e0c8 0,#c8e0c8 1px,transparent 1px,transparent 3px)"></div><div class="a" style="left:593px;top:571px;width:309px;height:1px;background:repeating-linear-gradient(to right,#c8e0c8 0,#c8e0c8 1px,transparent 1px,transparent 3px)"></div><div class="t" style="left:903px;top:565px;font-size:7.6px;line-height:8px;color:#c8c8c8">WH (Wor</div><svg class="a" style="left:0;top:0" width="960" height="260"><rect x="736.1" y="109.0" width="1" height="1" fill="rgb(48,48,48)"/><rect x="651.8" y="206.9" width="1" height="1" fill="rgb(22,22,22)"/><rect x="748.9" y="95.5" width="1" height="1" fill="rgb(40,40,40)"/><rect x="702.7" y="99.5" width="1" height="1" fill="rgb(34,34,34)"/><rect x="658.4" y="100.2" width="1" height="1" fill="rgb(34,34,34)"/><rect x="655.1" y="169.6" width="1" height="1" fill="rgb(26,26,26)"/><rect x="830.0" y="172.1" width="1" height="1" fill="rgb(22,22,22)"/><rect x="813.6" y="144.9" width="1" height="1" fill="rgb(26,26,26)"/><rect x="651.3" y="212.3" width="1" height="1" fill="rgb(30,30,30)"/><rect x="765.3" y="165.9" width="1" height="1" fill="rgb(40,40,40)"/><rect x="731.4" y="206.2" width="1" height="1" fill="rgb(26,26,26)"/><rect x="668.5" y="170.4" width="1" height="1" fill="rgb(26,26,26)"/><rect x="751.0" y="167.0" width="1" height="1" fill="rgb(22,22,22)"/><rect x="809.7" y="177.4" width="1" height="1" fill="rgb(34,34,34)"/><rect x="845.2" y="149.4" width="1" height="1" fill="rgb(30,30,30)"/><rect x="779.5" y="221.8" width="1" height="1" fill="rgb(30,30,30)"/><rect x="728.7" y="203.0" width="1" height="1" fill="rgb(48,48,48)"/><rect x="875.6" y="99.0" width="1" height="1" fill="rgb(30,30,30)"/><rect x="797.7" y="214.8" width="1" height="1" fill="rgb(48,48,48)"/><rect x="774.3" y="175.9" width="1" height="1" fill="rgb(22,22,22)"/><rect x="673.1" y="148.0" width="1" height="1" fill="rgb(60,60,60)"/><rect x="741.7" y="223.3" width="1" height="1" fill="rgb(34,34,34)"/><rect x="649.0" y="184.6" width="1" height="1" fill="rgb(60,60,60)"/><rect x="807.8" y="202.2" width="1" height="1" fill="rgb(60,60,60)"/><rect x="733.0" y="188.5" width="1" height="1" fill="rgb(40,40,40)"/><rect x="789.0" y="203.3" width="1" height="1" fill="rgb(22,22,22)"/><rect x="894.0" y="224.9" width="1" height="1" fill="rgb(34,34,34)"/><rect x="850.3" y="96.5" width="1" height="1" fill="rgb(48,48,48)"/><rect x="851.7" y="181.5" width="1" height="1" fill="rgb(48,48,48)"/><rect x="888.5" y="128.6" width="1" height="1" fill="rgb(34,34,34)"/><rect x="908.4" y="137.7" width="1" height="1" fill="rgb(34,34,34)"/><rect x="745.8" y="176.2" width="1" height="1" fill="rgb(34,34,34)"/><rect x="655.0" y="199.2" width="1" height="1" fill="rgb(26,26,26)"/><rect x="862.9" y="145.1" width="1" height="1" fill="rgb(60,60,60)"/><rect x="788.9" y="111.3" width="1" height="1" fill="rgb(34,34,34)"/><rect x="805.1" y="216.0" width="1" height="1" fill="rgb(60,60,60)"/><rect x="768.7" y="167.3" width="1" height="1" fill="rgb(48,48,48)"/><rect x="764.1" y="139.4" width="1" height="1" fill="rgb(34,34,34)"/><rect x="930.1" y="109.0" width="1" height="1" fill="rgb(26,26,26)"/><rect x="683.3" y="183.1" width="1" height="1" fill="rgb(22,22,22)"/><rect x="785.4" y="173.0" width="1" height="1" fill="rgb(30,30,30)"/><rect x="723.3" y="108.3" width="1" height="1" fill="rgb(40,40,40)"/><rect x="750.0" y="169.7" width="1" height="1" fill="rgb(26,26,26)"/><rect x="848.3" y="162.3" width="1" height="1" fill="rgb(40,40,40)"/><rect x="837.4" y="195.0" width="1" height="1" fill="rgb(34,34,34)"/><rect x="912.3" y="200.9" width="1" height="1" fill="rgb(60,60,60)"/><rect x="845.3" y="168.7" width="1" height="1" fill="rgb(34,34,34)"/><rect x="759.1" y="102.1" width="1" height="1" fill="rgb(48,48,48)"/><rect x="759.5" y="114.8" width="1" height="1" fill="rgb(26,26,26)"/><rect x="771.8" y="103.0" width="1" height="1" fill="rgb(40,40,40)"/><rect x="653.1" y="87.0" width="1" height="1" fill="rgb(26,26,26)"/><rect x="801.2" y="225.5" width="1" height="1" fill="rgb(40,40,40)"/><rect x="644.8" y="214.7" width="1" height="1" fill="rgb(40,40,40)"/><rect x="752.1" y="179.6" width="1" height="1" fill="rgb(30,30,30)"/><rect x="821.3" y="156.2" width="1" height="1" fill="rgb(22,22,22)"/><rect x="896.8" y="232.0" width="1" height="1" fill="rgb(34,34,34)"/><rect x="784.0" y="132.5" width="1" height="1" fill="rgb(26,26,26)"/><rect x="668.3" y="137.0" width="1" height="1" fill="rgb(30,30,30)"/><rect x="783.5" y="188.0" width="1" height="1" fill="rgb(40,40,40)"/><rect x="644.1" y="225.8" width="1" height="1" fill="rgb(40,40,40)"/><rect x="747.7" y="187.7" width="1" height="1" fill="rgb(22,22,22)"/><rect x="869.0" y="130.5" width="1" height="1" fill="rgb(48,48,48)"/><rect x="901.2" y="188.6" width="1" height="1" fill="rgb(30,30,30)"/><rect x="795.6" y="219.6" width="1" height="1" fill="rgb(30,30,30)"/><rect x="873.2" y="164.8" width="1" height="1" fill="rgb(60,60,60)"/><rect x="790.8" y="179.9" width="1" height="1" fill="rgb(40,40,40)"/><rect x="885.3" y="230.8" width="1" height="1" fill="rgb(60,60,60)"/><rect x="696.7" y="122.0" width="1" height="1" fill="rgb(34,34,34)"/><rect x="863.4" y="120.1" width="1" height="1" fill="rgb(40,40,40)"/><rect x="787.8" y="193.7" width="1" height="1" fill="rgb(22,22,22)"/><rect x="878.8" y="155.9" width="1" height="1" fill="rgb(26,26,26)"/><rect x="848.9" y="226.7" width="1" height="1" fill="rgb(34,34,34)"/><rect x="884.4" y="192.6" width="1" height="1" fill="rgb(30,30,30)"/><rect x="929.2" y="140.2" width="1" height="1" fill="rgb(26,26,26)"/><rect x="668.3" y="155.6" width="1" height="1" fill="rgb(30,30,30)"/><rect x="699.5" y="178.1" width="1" height="1" fill="rgb(40,40,40)"/><rect x="894.2" y="157.0" width="1" height="1" fill="rgb(48,48,48)"/><rect x="742.3" y="180.9" width="1" height="1" fill="rgb(60,60,60)"/><rect x="839.1" y="219.8" width="1" height="1" fill="rgb(60,60,60)"/><rect x="854.7" y="116.1" width="1" height="1" fill="rgb(26,26,26)"/><rect x="769.8" y="179.8" width="1" height="1" fill="rgb(22,22,22)"/><rect x="882.1" y="228.9" width="1" height="1" fill="rgb(34,34,34)"/><rect x="778.7" y="195.5" width="1" height="1" fill="rgb(22,22,22)"/><rect x="858.8" y="111.8" width="1" height="1" fill="rgb(26,26,26)"/><rect x="645.4" y="173.3" width="1" height="1" fill="rgb(34,34,34)"/><rect x="883.8" y="108.3" width="1" height="1" fill="rgb(60,60,60)"/><rect x="819.3" y="156.3" width="1" height="1" fill="rgb(30,30,30)"/><rect x="684.7" y="167.0" width="1" height="1" fill="rgb(22,22,22)"/><rect x="641.4" y="228.7" width="1" height="1" fill="rgb(48,48,48)"/><rect x="668.4" y="196.4" width="1" height="1" fill="rgb(26,26,26)"/><rect x="769.7" y="214.3" width="1" height="1" fill="rgb(60,60,60)"/><rect x="904.4" y="91.1" width="1" height="1" fill="rgb(26,26,26)"/><rect x="726.6" y="122.1" width="1" height="1" fill="rgb(40,40,40)"/><rect x="736.8" y="166.5" width="1" height="1" fill="rgb(60,60,60)"/><rect x="677.1" y="219.9" width="1" height="1" fill="rgb(30,30,30)"/><rect x="911.7" y="183.7" width="1" height="1" fill="rgb(60,60,60)"/><rect x="913.7" y="148.4" width="1" height="1" fill="rgb(40,40,40)"/><rect x="677.0" y="109.2" width="1" height="1" fill="rgb(40,40,40)"/><rect x="642.7" y="151.3" width="1" height="1" fill="rgb(26,26,26)"/><rect x="823.2" y="200.3" width="1" height="1" fill="rgb(26,26,26)"/><rect x="689.7" y="156.1" width="1" height="1" fill="rgb(48,48,48)"/><rect x="673.8" y="96.0" width="1" height="1" fill="rgb(48,48,48)"/><rect x="795.6" y="168.1" width="1" height="1" fill="rgb(60,60,60)"/><rect x="874.6" y="216.0" width="1" height="1" fill="rgb(22,22,22)"/><rect x="713.0" y="127.4" width="1" height="1" fill="rgb(60,60,60)"/><rect x="666.9" y="153.0" width="1" height="1" fill="rgb(22,22,22)"/><rect x="869.6" y="220.2" width="1" height="1" fill="rgb(34,34,34)"/><rect x="736.6" y="229.1" width="1" height="1" fill="rgb(40,40,40)"/><rect x="793.7" y="188.1" width="1" height="1" fill="rgb(34,34,34)"/><rect x="792.5" y="204.9" width="1" height="1" fill="rgb(40,40,40)"/><rect x="925.1" y="189.1" width="1" height="1" fill="rgb(30,30,30)"/><rect x="919.4" y="217.3" width="1" height="1" fill="rgb(26,26,26)"/><rect x="894.0" y="107.0" width="1" height="1" fill="rgb(22,22,22)"/><rect x="757.1" y="133.1" width="1" height="1" fill="rgb(48,48,48)"/><rect x="710.6" y="97.7" width="1" height="1" fill="rgb(48,48,48)"/><rect x="729.7" y="104.9" width="1" height="1" fill="rgb(60,60,60)"/><rect x="684.3" y="191.6" width="1" height="1" fill="rgb(48,48,48)"/><rect x="749.1" y="124.0" width="1" height="1" fill="rgb(26,26,26)"/><rect x="933.1" y="119.1" width="1" height="1" fill="rgb(22,22,22)"/><rect x="758.9" y="158.1" width="1" height="1" fill="rgb(48,48,48)"/><rect x="891.7" y="110.6" width="1" height="1" fill="rgb(34,34,34)"/><rect x="941.2" y="146.0" width="1" height="1" fill="rgb(34,34,34)"/><rect x="696.9" y="133.5" width="1" height="1" fill="rgb(48,48,48)"/><rect x="749.0" y="136.3" width="1" height="1" fill="rgb(34,34,34)"/><rect x="771.8" y="89.6" width="1" height="1" fill="rgb(30,30,30)"/><rect x="795.3" y="130.1" width="1" height="1" fill="rgb(22,22,22)"/><rect x="671.5" y="221.1" width="1" height="1" fill="rgb(26,26,26)"/><rect x="934.3" y="102.3" width="1" height="1" fill="rgb(30,30,30)"/><rect x="720.2" y="219.3" width="1" height="1" fill="rgb(26,26,26)"/><rect x="719.8" y="105.9" width="1" height="1" fill="rgb(34,34,34)"/><rect x="897.0" y="185.7" width="1" height="1" fill="rgb(30,30,30)"/><rect x="761.2" y="165.3" width="1" height="1" fill="rgb(40,40,40)"/><rect x="811.6" y="189.3" width="1" height="1" fill="rgb(22,22,22)"/><rect x="722.4" y="203.7" width="1" height="1" fill="rgb(26,26,26)"/><rect x="767.1" y="97.6" width="1" height="1" fill="rgb(22,22,22)"/><rect x="831.1" y="204.0" width="1" height="1" fill="rgb(22,22,22)"/><rect x="823.1" y="119.5" width="1" height="1" fill="rgb(30,30,30)"/><rect x="901.0" y="153.3" width="1" height="1" fill="rgb(30,30,30)"/><rect x="941.3" y="148.0" width="1" height="1" fill="rgb(30,30,30)"/><rect x="827.2" y="93.3" width="1" height="1" fill="rgb(48,48,48)"/><rect x="710.0" y="103.0" width="1" height="1" fill="rgb(26,26,26)"/><rect x="717.1" y="113.4" width="1" height="1" fill="rgb(30,30,30)"/><rect x="829.4" y="164.5" width="1" height="1" fill="rgb(26,26,26)"/><rect x="725.7" y="160.0" width="1" height="1" fill="rgb(26,26,26)"/><rect x="719.8" y="204.3" width="1" height="1" fill="rgb(30,30,30)"/><rect x="648.3" y="89.7" width="1" height="1" fill="rgb(40,40,40)"/><rect x="805.6" y="114.7" width="1" height="1" fill="rgb(34,34,34)"/><rect x="712.2" y="152.3" width="1" height="1" fill="rgb(48,48,48)"/><rect x="887.6" y="150.1" width="1" height="1" fill="rgb(34,34,34)"/><rect x="804.0" y="216.8" width="1" height="1" fill="rgb(40,40,40)"/><rect x="731.2" y="118.4" width="1" height="1" fill="rgb(26,26,26)"/><rect x="741.9" y="208.5" width="1" height="1" fill="rgb(48,48,48)"/><rect x="860.0" y="107.4" width="1" height="1" fill="rgb(30,30,30)"/><rect x="937.5" y="209.2" width="1" height="1" fill="rgb(22,22,22)"/><rect x="658.6" y="195.2" width="1" height="1" fill="rgb(30,30,30)"/><rect x="768.8" y="95.1" width="1" height="1" fill="rgb(48,48,48)"/><rect x="894.4" y="214.1" width="1" height="1" fill="rgb(48,48,48)"/><rect x="934.1" y="174.4" width="1" height="1" fill="rgb(48,48,48)"/><rect x="726.7" y="154.1" width="1" height="1" fill="rgb(26,26,26)"/><rect x="719.3" y="87.5" width="1" height="1" fill="rgb(30,30,30)"/><rect x="931.3" y="229.0" width="1" height="1" fill="rgb(40,40,40)"/><rect x="736.0" y="92.0" width="1" height="1" fill="rgb(30,30,30)"/><rect x="703.7" y="113.7" width="1" height="1" fill="rgb(30,30,30)"/><rect x="753.8" y="156.3" width="1" height="1" fill="rgb(40,40,40)"/><rect x="837.7" y="123.2" width="1" height="1" fill="rgb(60,60,60)"/><rect x="638.5" y="125.6" width="1" height="1" fill="rgb(22,22,22)"/><rect x="681.0" y="172.7" width="1" height="1" fill="rgb(34,34,34)"/><rect x="643.9" y="131.4" width="1" height="1" fill="rgb(26,26,26)"/><rect x="662.9" y="226.8" width="1" height="1" fill="rgb(60,60,60)"/><rect x="866.7" y="183.0" width="1" height="1" fill="rgb(48,48,48)"/><rect x="876.9" y="174.1" width="1" height="1" fill="rgb(60,60,60)"/><rect x="736.8" y="230.8" width="1" height="1" fill="rgb(26,26,26)"/><rect x="724.0" y="177.3" width="1" height="1" fill="rgb(26,26,26)"/><rect x="650.4" y="209.0" width="1" height="1" fill="rgb(40,40,40)"/><rect x="829.0" y="194.1" width="1" height="1" fill="rgb(60,60,60)"/><rect x="791.7" y="219.8" width="1" height="1" fill="rgb(60,60,60)"/><rect x="791.3" y="208.9" width="1" height="1" fill="rgb(60,60,60)"/><rect x="641.9" y="187.2" width="1" height="1" fill="rgb(60,60,60)"/><rect x="910.2" y="186.7" width="1" height="1" fill="rgb(48,48,48)"/><rect x="833.7" y="99.4" width="1" height="1" fill="rgb(22,22,22)"/><rect x="677.7" y="139.7" width="1" height="1" fill="rgb(22,22,22)"/><rect x="752.2" y="152.9" width="1" height="1" fill="rgb(22,22,22)"/><rect x="829.1" y="178.4" width="1" height="1" fill="rgb(48,48,48)"/><rect x="711.8" y="125.5" width="1" height="1" fill="rgb(34,34,34)"/><rect x="881.1" y="196.2" width="1" height="1" fill="rgb(40,40,40)"/><rect x="911.7" y="100.4" width="1" height="1" fill="rgb(40,40,40)"/><rect x="657.2" y="194.6" width="1" height="1" fill="rgb(30,30,30)"/><rect x="884.6" y="210.5" width="1" height="1" fill="rgb(26,26,26)"/><rect x="860.2" y="117.0" width="1" height="1" fill="rgb(48,48,48)"/><rect x="835.9" y="154.2" width="1" height="1" fill="rgb(60,60,60)"/><rect x="754.1" y="156.9" width="1" height="1" fill="rgb(48,48,48)"/><rect x="724.9" y="93.8" width="1" height="1" fill="rgb(48,48,48)"/><rect x="833.7" y="98.3" width="1" height="1" fill="rgb(26,26,26)"/><rect x="738.5" y="182.1" width="1" height="1" fill="rgb(48,48,48)"/><rect x="730.2" y="169.9" width="1" height="1" fill="rgb(22,22,22)"/><rect x="784.6" y="157.9" width="1" height="1" fill="rgb(48,48,48)"/><rect x="667.5" y="118.8" width="1" height="1" fill="rgb(34,34,34)"/><rect x="726.0" y="162.4" width="1" height="1" fill="rgb(34,34,34)"/><rect x="779.6" y="199.0" width="1" height="1" fill="rgb(40,40,40)"/><rect x="698.0" y="229.8" width="1" height="1" fill="rgb(34,34,34)"/><rect x="642.4" y="154.0" width="1" height="1" fill="rgb(60,60,60)"/><rect x="792.0" y="232.2" width="1" height="1" fill="rgb(30,30,30)"/><rect x="755.4" y="220.8" width="1" height="1" fill="rgb(26,26,26)"/><rect x="659.8" y="100.2" width="1" height="1" fill="rgb(48,48,48)"/><rect x="797.4" y="226.1" width="1" height="1" fill="rgb(26,26,26)"/><rect x="821.6" y="179.2" width="1" height="1" fill="rgb(30,30,30)"/><rect x="908.4" y="189.7" width="1" height="1" fill="rgb(26,26,26)"/><rect x="789.4" y="214.9" width="1" height="1" fill="rgb(34,34,34)"/><rect x="644.6" y="87.5" width="1" height="1" fill="rgb(34,34,34)"/><rect x="845.6" y="146.2" width="1" height="1" fill="rgb(48,48,48)"/><rect x="680.1" y="137.2" width="1" height="1" fill="rgb(30,30,30)"/><rect x="674.0" y="135.4" width="1" height="1" fill="rgb(30,30,30)"/><rect x="866.7" y="209.5" width="1" height="1" fill="rgb(22,22,22)"/><rect x="924.6" y="115.6" width="1" height="1" fill="rgb(22,22,22)"/><rect x="912.9" y="129.3" width="1" height="1" fill="rgb(30,30,30)"/><rect x="656.9" y="144.0" width="1" height="1" fill="rgb(60,60,60)"/><rect x="817.3" y="139.7" width="1" height="1" fill="rgb(34,34,34)"/><rect x="868.2" y="211.7" width="1" height="1" fill="rgb(30,30,30)"/><rect x="668.1" y="208.9" width="1" height="1" fill="rgb(30,30,30)"/><rect x="831.3" y="108.7" width="1" height="1" fill="rgb(30,30,30)"/><rect x="770.5" y="133.1" width="1" height="1" fill="rgb(60,60,60)"/><rect x="751.2" y="226.6" width="1" height="1" fill="rgb(22,22,22)"/><rect x="885.5" y="179.1" width="1" height="1" fill="rgb(40,40,40)"/><rect x="805.1" y="192.1" width="1" height="1" fill="rgb(22,22,22)"/><rect x="922.6" y="147.0" width="1" height="1" fill="rgb(40,40,40)"/><rect x="867.3" y="181.1" width="1" height="1" fill="rgb(30,30,30)"/><rect x="785.6" y="220.1" width="1" height="1" fill="rgb(40,40,40)"/><rect x="676.0" y="155.9" width="1" height="1" fill="rgb(30,30,30)"/><rect x="723.2" y="124.3" width="1" height="1" fill="rgb(48,48,48)"/><rect x="935.7" y="125.0" width="1" height="1" fill="rgb(48,48,48)"/><rect x="710.0" y="157.5" width="1" height="1" fill="rgb(48,48,48)"/><rect x="757.7" y="111.4" width="1" height="1" fill="rgb(26,26,26)"/><rect x="660.0" y="160.1" width="1" height="1" fill="rgb(60,60,60)"/><rect x="789.1" y="119.1" width="1" height="1" fill="rgb(30,30,30)"/><rect x="941.9" y="152.7" width="1" height="1" fill="rgb(26,26,26)"/><rect x="804.6" y="122.6" width="1" height="1" fill="rgb(26,26,26)"/><rect x="741.6" y="100.3" width="1" height="1" fill="rgb(26,26,26)"/><rect x="749.7" y="205.2" width="1" height="1" fill="rgb(26,26,26)"/><rect x="908.5" y="196.5" width="1" height="1" fill="rgb(34,34,34)"/><rect x="754.1" y="195.9" width="1" height="1" fill="rgb(26,26,26)"/><rect x="752.3" y="136.4" width="1" height="1" fill="rgb(22,22,22)"/><rect x="789.4" y="170.8" width="1" height="1" fill="rgb(30,30,30)"/><rect x="675.5" y="160.5" width="1" height="1" fill="rgb(48,48,48)"/><rect x="878.8" y="210.9" width="1" height="1" fill="rgb(22,22,22)"/><rect x="719.9" y="123.3" width="1" height="1" fill="rgb(34,34,34)"/><rect x="834.6" y="150.0" width="1" height="1" fill="rgb(30,30,30)"/><rect x="896.7" y="214.4" width="1" height="1" fill="rgb(22,22,22)"/><rect x="675.9" y="149.1" width="1" height="1" fill="rgb(60,60,60)"/><rect x="911.1" y="156.1" width="1" height="1" fill="rgb(40,40,40)"/><rect x="786.9" y="97.7" width="1" height="1" fill="rgb(60,60,60)"/><rect x="798.5" y="155.4" width="1" height="1" fill="rgb(34,34,34)"/><rect x="713.0" y="102.9" width="1" height="1" fill="rgb(26,26,26)"/><rect x="683.5" y="228.9" width="1" height="1" fill="rgb(22,22,22)"/><rect x="925.1" y="192.4" width="1" height="1" fill="rgb(48,48,48)"/><rect x="896.0" y="217.7" width="1" height="1" fill="rgb(22,22,22)"/><rect x="805.8" y="92.8" width="1" height="1" fill="rgb(60,60,60)"/><rect x="675.4" y="170.1" width="1" height="1" fill="rgb(22,22,22)"/><rect x="834.5" y="131.4" width="1" height="1" fill="rgb(26,26,26)"/><rect x="828.7" y="164.1" width="1" height="1" fill="rgb(34,34,34)"/><rect x="850.8" y="103.4" width="1" height="1" fill="rgb(22,22,22)"/><rect x="728.9" y="224.8" width="1" height="1" fill="rgb(26,26,26)"/><rect x="755.8" y="119.6" width="1" height="1" fill="rgb(40,40,40)"/><rect x="637.4" y="165.5" width="1" height="1" fill="rgb(34,34,34)"/><rect x="722.3" y="133.2" width="1" height="1" fill="rgb(60,60,60)"/><rect x="907.4" y="156.4" width="1" height="1" fill="rgb(26,26,26)"/><rect x="804.4" y="91.3" width="1" height="1" fill="rgb(34,34,34)"/><rect x="852.6" y="131.9" width="1" height="1" fill="rgb(22,22,22)"/><rect x="696.4" y="216.2" width="1" height="1" fill="rgb(48,48,48)"/><rect x="765.5" y="124.6" width="1" height="1" fill="rgb(48,48,48)"/><rect x="766.8" y="141.1" width="1" height="1" fill="rgb(34,34,34)"/><rect x="647.4" y="136.4" width="1" height="1" fill="rgb(34,34,34)"/><rect x="747.9" y="144.9" width="1" height="1" fill="rgb(22,22,22)"/><rect x="880.9" y="194.9" width="1" height="1" fill="rgb(40,40,40)"/><rect x="657.6" y="159.4" width="1" height="1" fill="rgb(26,26,26)"/><rect x="732.4" y="206.7" width="1" height="1" fill="rgb(26,26,26)"/><rect x="779.3" y="125.7" width="1" height="1" fill="rgb(30,30,30)"/><rect x="670.4" y="178.0" width="1" height="1" fill="rgb(40,40,40)"/><rect x="694.3" y="119.6" width="1" height="1" fill="rgb(34,34,34)"/><rect x="915.6" y="95.2" width="1" height="1" fill="rgb(40,40,40)"/><rect x="681.8" y="144.4" width="1" height="1" fill="rgb(26,26,26)"/><rect x="644.2" y="174.0" width="1" height="1" fill="rgb(34,34,34)"/><rect x="652.9" y="95.8" width="1" height="1" fill="rgb(34,34,34)"/><rect x="774.6" y="191.0" width="1" height="1" fill="rgb(30,30,30)"/><rect x="861.2" y="232.6" width="1" height="1" fill="rgb(26,26,26)"/><rect x="737.7" y="114.1" width="1" height="1" fill="rgb(40,40,40)"/><rect x="865.4" y="91.7" width="1" height="1" fill="rgb(48,48,48)"/><rect x="859.0" y="209.5" width="1" height="1" fill="rgb(30,30,30)"/><rect x="772.4" y="102.9" width="1" height="1" fill="rgb(22,22,22)"/><rect x="722.6" y="138.3" width="1" height="1" fill="rgb(22,22,22)"/><rect x="808.7" y="197.8" width="1" height="1" fill="rgb(34,34,34)"/><rect x="746.1" y="206.9" width="1" height="1" fill="rgb(60,60,60)"/><rect x="883.0" y="99.8" width="1" height="1" fill="rgb(48,48,48)"/><rect x="781.9" y="141.4" width="1" height="1" fill="rgb(34,34,34)"/><rect x="696.1" y="140.2" width="1" height="1" fill="rgb(34,34,34)"/><rect x="646.3" y="147.0" width="1" height="1" fill="rgb(60,60,60)"/><rect x="828.4" y="146.1" width="1" height="1" fill="rgb(34,34,34)"/><rect x="647.7" y="96.1" width="1" height="1" fill="rgb(22,22,22)"/><rect x="715.6" y="196.1" width="1" height="1" fill="rgb(40,40,40)"/><rect x="740.8" y="126.8" width="1" height="1" fill="rgb(40,40,40)"/><rect x="650.3" y="196.0" width="1" height="1" fill="rgb(48,48,48)"/><rect x="733.8" y="127.2" width="1" height="1" fill="rgb(22,22,22)"/><rect x="857.8" y="174.0" width="1" height="1" fill="rgb(60,60,60)"/><rect x="831.0" y="224.7" width="1" height="1" fill="rgb(22,22,22)"/><rect x="889.8" y="102.7" width="1" height="1" fill="rgb(48,48,48)"/><rect x="929.8" y="226.3" width="1" height="1" fill="rgb(34,34,34)"/><rect x="878.7" y="220.4" width="1" height="1" fill="rgb(60,60,60)"/><rect x="788.0" y="222.5" width="1" height="1" fill="rgb(26,26,26)"/><rect x="639.7" y="222.9" width="1" height="1" fill="rgb(30,30,30)"/><rect x="888.8" y="199.8" width="1" height="1" fill="rgb(40,40,40)"/><rect x="709.3" y="212.7" width="1" height="1" fill="rgb(34,34,34)"/><rect x="747.7" y="201.2" width="1" height="1" fill="rgb(22,22,22)"/><rect x="793.6" y="144.2" width="1" height="1" fill="rgb(26,26,26)"/><rect x="712.7" y="96.5" width="1" height="1" fill="rgb(22,22,22)"/><rect x="784.4" y="166.5" width="1" height="1" fill="rgb(26,26,26)"/><rect x="937.0" y="216.0" width="1" height="1" fill="rgb(22,22,22)"/><rect x="718.1" y="99.3" width="1" height="1" fill="rgb(22,22,22)"/><rect x="765.8" y="231.3" width="1" height="1" fill="rgb(34,34,34)"/><rect x="690.0" y="106.4" width="1" height="1" fill="rgb(34,34,34)"/><rect x="826.8" y="185.4" width="1" height="1" fill="rgb(48,48,48)"/><rect x="801.8" y="200.0" width="1" height="1" fill="rgb(60,60,60)"/><rect x="674.1" y="209.8" width="1" height="1" fill="rgb(30,30,30)"/><rect x="722.5" y="126.1" width="1" height="1" fill="rgb(30,30,30)"/><rect x="862.8" y="116.1" width="1" height="1" fill="rgb(26,26,26)"/><rect x="693.8" y="121.4" width="1" height="1" fill="rgb(30,30,30)"/><rect x="907.6" y="171.4" width="1" height="1" fill="rgb(30,30,30)"/><rect x="656.8" y="123.7" width="1" height="1" fill="rgb(26,26,26)"/><rect x="792.2" y="120.8" width="1" height="1" fill="rgb(60,60,60)"/><rect x="667.8" y="154.7" width="1" height="1" fill="rgb(22,22,22)"/><rect x="668.3" y="156.3" width="1" height="1" fill="rgb(60,60,60)"/><rect x="707.7" y="152.5" width="1" height="1" fill="rgb(30,30,30)"/><rect x="649.4" y="129.9" width="1" height="1" fill="rgb(22,22,22)"/><rect x="652.4" y="174.7" width="1" height="1" fill="rgb(60,60,60)"/><rect x="815.5" y="222.8" width="1" height="1" fill="rgb(30,30,30)"/><rect x="793.9" y="113.0" width="1" height="1" fill="rgb(40,40,40)"/><rect x="716.5" y="200.6" width="1" height="1" fill="rgb(22,22,22)"/><rect x="669.4" y="174.0" width="1" height="1" fill="rgb(40,40,40)"/><rect x="744.0" y="92.5" width="1" height="1" fill="rgb(30,30,30)"/><rect x="680.3" y="116.8" width="1" height="1" fill="rgb(30,30,30)"/><rect x="648.7" y="193.9" width="1" height="1" fill="rgb(26,26,26)"/><rect x="886.3" y="206.5" width="1" height="1" fill="rgb(34,34,34)"/><rect x="844.6" y="114.0" width="1" height="1" fill="rgb(30,30,30)"/><rect x="660.8" y="91.6" width="1" height="1" fill="rgb(34,34,34)"/><rect x="804.7" y="96.2" width="1" height="1" fill="rgb(22,22,22)"/><rect x="880.5" y="183.9" width="1" height="1" fill="rgb(26,26,26)"/><rect x="832.6" y="100.3" width="1" height="1" fill="rgb(26,26,26)"/><rect x="758.7" y="126.6" width="1" height="1" fill="rgb(30,30,30)"/><rect x="841.4" y="148.0" width="1" height="1" fill="rgb(22,22,22)"/><rect x="732.6" y="169.7" width="1" height="1" fill="rgb(30,30,30)"/><rect x="763.7" y="89.7" width="1" height="1" fill="rgb(60,60,60)"/><rect x="942.0" y="140.1" width="1" height="1" fill="rgb(26,26,26)"/><rect x="756.6" y="146.1" width="1" height="1" fill="rgb(22,22,22)"/><rect x="769.9" y="109.9" width="1" height="1" fill="rgb(22,22,22)"/><rect x="888.0" y="146.3" width="1" height="1" fill="rgb(30,30,30)"/><rect x="778.0" y="110.7" width="1" height="1" fill="rgb(22,22,22)"/><rect x="652.8" y="107.8" width="1" height="1" fill="rgb(60,60,60)"/><rect x="915.4" y="100.0" width="1" height="1" fill="rgb(40,40,40)"/><rect x="920.7" y="194.6" width="1" height="1" fill="rgb(26,26,26)"/><rect x="681.6" y="128.4" width="1" height="1" fill="rgb(40,40,40)"/><rect x="689.6" y="96.8" width="1" height="1" fill="rgb(34,34,34)"/><rect x="787.1" y="204.5" width="1" height="1" fill="rgb(60,60,60)"/><rect x="697.4" y="105.5" width="1" height="1" fill="rgb(22,22,22)"/><rect x="935.5" y="157.5" width="1" height="1" fill="rgb(22,22,22)"/><rect x="822.9" y="179.9" width="1" height="1" fill="rgb(22,22,22)"/><rect x="913.7" y="177.6" width="1" height="1" fill="rgb(60,60,60)"/><rect x="909.7" y="180.5" width="1" height="1" fill="rgb(60,60,60)"/><rect x="705.0" y="146.1" width="1" height="1" fill="rgb(60,60,60)"/><rect x="697.0" y="156.1" width="1" height="1" fill="rgb(40,40,40)"/><rect x="703.7" y="145.4" width="1" height="1" fill="rgb(40,40,40)"/><rect x="684.9" y="139.4" width="1" height="1" fill="rgb(26,26,26)"/><rect x="712.6" y="192.8" width="1" height="1" fill="rgb(26,26,26)"/><rect x="649.6" y="169.1" width="1" height="1" fill="rgb(60,60,60)"/><rect x="842.7" y="184.5" width="1" height="1" fill="rgb(30,30,30)"/><rect x="673.0" y="174.5" width="1" height="1" fill="rgb(40,40,40)"/><rect x="896.8" y="200.6" width="1" height="1" fill="rgb(48,48,48)"/><rect x="765.5" y="172.1" width="1" height="1" fill="rgb(34,34,34)"/><rect x="756.1" y="140.6" width="1" height="1" fill="rgb(40,40,40)"/><rect x="771.1" y="90.4" width="1" height="1" fill="rgb(40,40,40)"/><rect x="938.8" y="154.9" width="1" height="1" fill="rgb(34,34,34)"/><rect x="870.7" y="200.9" width="1" height="1" fill="rgb(34,34,34)"/><rect x="893.0" y="205.3" width="1" height="1" fill="rgb(34,34,34)"/><rect x="669.8" y="105.8" width="1" height="1" fill="rgb(34,34,34)"/><rect x="748.8" y="204.1" width="1" height="1" fill="rgb(40,40,40)"/><rect x="793.1" y="93.0" width="1" height="1" fill="rgb(48,48,48)"/><rect x="676.9" y="221.6" width="1" height="1" fill="rgb(30,30,30)"/><rect x="875.0" y="161.7" width="1" height="1" fill="rgb(22,22,22)"/><rect x="867.1" y="217.7" width="1" height="1" fill="rgb(48,48,48)"/><rect x="928.0" y="106.9" width="1" height="1" fill="rgb(60,60,60)"/><rect x="657.3" y="176.7" width="1" height="1" fill="rgb(48,48,48)"/><rect x="886.4" y="115.3" width="1" height="1" fill="rgb(34,34,34)"/><rect x="725.1" y="205.4" width="1" height="1" fill="rgb(60,60,60)"/><rect x="687.5" y="202.1" width="1" height="1" fill="rgb(26,26,26)"/><rect x="657.0" y="138.2" width="1" height="1" fill="rgb(60,60,60)"/><rect x="714.2" y="134.3" width="1" height="1" fill="rgb(40,40,40)"/><rect x="721.1" y="206.1" width="1" height="1" fill="rgb(26,26,26)"/><rect x="714.8" y="227.8" width="1" height="1" fill="rgb(34,34,34)"/><rect x="700.7" y="125.4" width="1" height="1" fill="rgb(40,40,40)"/><rect x="709.6" y="141.4" width="1" height="1" fill="rgb(26,26,26)"/><rect x="692.7" y="110.5" width="1" height="1" fill="rgb(30,30,30)"/><rect x="845.0" y="217.7" width="1" height="1" fill="rgb(26,26,26)"/><rect x="879.4" y="125.6" width="1" height="1" fill="rgb(60,60,60)"/><rect x="799.4" y="179.9" width="1" height="1" fill="rgb(30,30,30)"/><rect x="932.6" y="153.1" width="1" height="1" fill="rgb(40,40,40)"/><rect x="814.5" y="215.9" width="1" height="1" fill="rgb(22,22,22)"/><rect x="714.1" y="165.2" width="1" height="1" fill="rgb(60,60,60)"/><rect x="757.6" y="203.5" width="1" height="1" fill="rgb(30,30,30)"/><rect x="752.0" y="140.9" width="1" height="1" fill="rgb(26,26,26)"/><rect x="747.2" y="198.6" width="1" height="1" fill="rgb(34,34,34)"/><rect x="707.4" y="176.8" width="1" height="1" fill="rgb(22,22,22)"/><rect x="727.7" y="162.4" width="1" height="1" fill="rgb(30,30,30)"/><rect x="832.6" y="230.7" width="1" height="1" fill="rgb(40,40,40)"/><rect x="921.1" y="217.8" width="1" height="1" fill="rgb(48,48,48)"/><rect x="637.5" y="91.9" width="1" height="1" fill="rgb(26,26,26)"/><rect x="726.0" y="178.3" width="1" height="1" fill="rgb(34,34,34)"/><rect x="793.9" y="217.7" width="1" height="1" fill="rgb(26,26,26)"/><rect x="786.4" y="176.4" width="1" height="1" fill="rgb(22,22,22)"/><rect x="643.8" y="87.4" width="1" height="1" fill="rgb(30,30,30)"/><rect x="729.9" y="163.4" width="1" height="1" fill="rgb(40,40,40)"/><rect x="705.6" y="172.2" width="1" height="1" fill="rgb(40,40,40)"/><rect x="677.9" y="140.5" width="1" height="1" fill="rgb(60,60,60)"/><rect x="782.3" y="106.7" width="1" height="1" fill="rgb(60,60,60)"/><rect x="711.5" y="108.8" width="1" height="1" fill="rgb(22,22,22)"/><rect x="656.5" y="108.1" width="1" height="1" fill="rgb(48,48,48)"/><rect x="876.3" y="145.7" width="1" height="1" fill="rgb(30,30,30)"/><rect x="932.9" y="95.2" width="1" height="1" fill="rgb(60,60,60)"/><rect x="809.1" y="138.1" width="1" height="1" fill="rgb(48,48,48)"/><rect x="814.0" y="174.9" width="1" height="1" fill="rgb(40,40,40)"/><rect x="861.5" y="123.3" width="1" height="1" fill="rgb(22,22,22)"/><rect x="650.5" y="164.6" width="1" height="1" fill="rgb(34,34,34)"/><rect x="693.8" y="110.2" width="1" height="1" fill="rgb(60,60,60)"/><rect x="669.1" y="176.4" width="1" height="1" fill="rgb(48,48,48)"/><rect x="924.9" y="107.8" width="1" height="1" fill="rgb(26,26,26)"/><rect x="795.6" y="180.8" width="1" height="1" fill="rgb(48,48,48)"/><rect x="833.3" y="205.8" width="1" height="1" fill="rgb(26,26,26)"/><rect x="792.6" y="96.3" width="1" height="1" fill="rgb(48,48,48)"/><rect x="651.8" y="216.8" width="1" height="1" fill="rgb(60,60,60)"/><rect x="783.2" y="165.6" width="1" height="1" fill="rgb(34,34,34)"/><rect x="895.4" y="195.8" width="1" height="1" fill="rgb(34,34,34)"/><rect x="661.6" y="182.7" width="1" height="1" fill="rgb(26,26,26)"/><rect x="706.1" y="102.4" width="1" height="1" fill="rgb(26,26,26)"/><rect x="834.1" y="105.0" width="1" height="1" fill="rgb(48,48,48)"/><rect x="920.1" y="224.7" width="1" height="1" fill="rgb(30,30,30)"/><rect x="854.8" y="125.8" width="1" height="1" fill="rgb(40,40,40)"/><rect x="844.8" y="187.1" width="1" height="1" fill="rgb(40,40,40)"/><rect x="934.4" y="130.2" width="1" height="1" fill="rgb(26,26,26)"/><rect x="663.1" y="161.1" width="1" height="1" fill="rgb(26,26,26)"/><rect x="716.7" y="121.5" width="1" height="1" fill="rgb(48,48,48)"/><rect x="699.0" y="110.2" width="1" height="1" fill="rgb(30,30,30)"/><rect x="695.7" y="143.8" width="1" height="1" fill="rgb(40,40,40)"/><rect x="710.2" y="219.5" width="1" height="1" fill="rgb(48,48,48)"/><rect x="919.0" y="230.3" width="1" height="1" fill="rgb(60,60,60)"/><rect x="936.6" y="155.5" width="1" height="1" fill="rgb(60,60,60)"/><rect x="799.4" y="87.9" width="1" height="1" fill="rgb(22,22,22)"/><rect x="770.8" y="192.8" width="1" height="1" fill="rgb(40,40,40)"/><rect x="907.7" y="202.2" width="1" height="1" fill="rgb(34,34,34)"/><rect x="827.5" y="98.4" width="1" height="1" fill="rgb(26,26,26)"/><rect x="681.2" y="90.9" width="1" height="1" fill="rgb(22,22,22)"/><rect x="827.3" y="110.6" width="1" height="1" fill="rgb(26,26,26)"/><rect x="851.4" y="91.5" width="1" height="1" fill="rgb(26,26,26)"/><rect x="848.9" y="179.5" width="1" height="1" fill="rgb(48,48,48)"/><rect x="657.8" y="93.8" width="1" height="1" fill="rgb(60,60,60)"/><rect x="817.7" y="140.1" width="1" height="1" fill="rgb(60,60,60)"/><rect x="929.1" y="164.9" width="1" height="1" fill="rgb(48,48,48)"/><rect x="657.2" y="213.7" width="1" height="1" fill="rgb(48,48,48)"/><rect x="926.0" y="102.6" width="1" height="1" fill="rgb(26,26,26)"/><rect x="699.2" y="91.9" width="1" height="1" fill="rgb(60,60,60)"/><rect x="915.8" y="197.0" width="1" height="1" fill="rgb(22,22,22)"/><rect x="889.5" y="179.2" width="1" height="1" fill="rgb(30,30,30)"/><rect x="783.0" y="106.4" width="1" height="1" fill="rgb(60,60,60)"/><rect x="868.8" y="116.9" width="1" height="1" fill="rgb(30,30,30)"/><rect x="740.0" y="125.1" width="1" height="1" fill="rgb(30,30,30)"/><rect x="715.6" y="128.3" width="1" height="1" fill="rgb(48,48,48)"/><rect x="869.5" y="219.9" width="1" height="1" fill="rgb(60,60,60)"/><rect x="932.0" y="160.5" width="1" height="1" fill="rgb(60,60,60)"/><rect x="725.0" y="195.9" width="1" height="1" fill="rgb(60,60,60)"/><rect x="763.4" y="150.7" width="1" height="1" fill="rgb(60,60,60)"/><rect x="667.1" y="155.5" width="1" height="1" fill="rgb(22,22,22)"/><rect x="801.6" y="118.6" width="1" height="1" fill="rgb(60,60,60)"/><rect x="890.3" y="170.9" width="1" height="1" fill="rgb(30,30,30)"/><rect x="689.1" y="87.2" width="1" height="1" fill="rgb(26,26,26)"/><rect x="725.2" y="196.6" width="1" height="1" fill="rgb(22,22,22)"/><rect x="638.3" y="158.7" width="1" height="1" fill="rgb(34,34,34)"/><rect x="849.7" y="207.5" width="1" height="1" fill="rgb(34,34,34)"/><rect x="818.3" y="226.8" width="1" height="1" fill="rgb(40,40,40)"/><rect x="716.7" y="224.8" width="1" height="1" fill="rgb(30,30,30)"/><rect x="886.5" y="224.0" width="1" height="1" fill="rgb(26,26,26)"/><rect x="789.5" y="103.0" width="1" height="1" fill="rgb(48,48,48)"/><rect x="871.6" y="158.6" width="1" height="1" fill="rgb(48,48,48)"/><rect x="808.7" y="102.3" width="1" height="1" fill="rgb(30,30,30)"/><rect x="745.8" y="145.6" width="1" height="1" fill="rgb(34,34,34)"/><rect x="909.9" y="195.8" width="1" height="1" fill="rgb(34,34,34)"/><rect x="908.9" y="90.7" width="1" height="1" fill="rgb(26,26,26)"/><rect x="729.8" y="149.5" width="1" height="1" fill="rgb(40,40,40)"/><rect x="790.4" y="142.4" width="1" height="1" fill="rgb(48,48,48)"/><rect x="708.5" y="154.3" width="1" height="1" fill="rgb(40,40,40)"/><rect x="818.8" y="187.6" width="1" height="1" fill="rgb(40,40,40)"/><rect x="834.8" y="137.9" width="1" height="1" fill="rgb(30,30,30)"/><rect x="796.7" y="213.7" width="1" height="1" fill="rgb(34,34,34)"/><rect x="839.6" y="195.3" width="1" height="1" fill="rgb(26,26,26)"/><rect x="778.7" y="187.6" width="1" height="1" fill="rgb(30,30,30)"/><rect x="814.2" y="105.4" width="1" height="1" fill="rgb(34,34,34)"/><rect x="833.7" y="188.7" width="1" height="1" fill="rgb(40,40,40)"/><rect x="695.6" y="131.0" width="1" height="1" fill="rgb(48,48,48)"/><rect x="889.9" y="177.1" width="1" height="1" fill="rgb(48,48,48)"/><rect x="684.7" y="123.1" width="1" height="1" fill="rgb(30,30,30)"/><rect x="821.5" y="137.9" width="1" height="1" fill="rgb(26,26,26)"/><rect x="737.4" y="114.6" width="1" height="1" fill="rgb(48,48,48)"/><rect x="941.4" y="111.0" width="1" height="1" fill="rgb(48,48,48)"/><rect x="668.1" y="143.1" width="1" height="1" fill="rgb(26,26,26)"/><rect x="880.2" y="194.1" width="1" height="1" fill="rgb(34,34,34)"/><rect x="720.8" y="103.0" width="1" height="1" fill="rgb(22,22,22)"/><rect x="722.9" y="216.2" width="1" height="1" fill="rgb(34,34,34)"/><rect x="647.4" y="145.3" width="1" height="1" fill="rgb(60,60,60)"/><rect x="770.6" y="119.5" width="1" height="1" fill="rgb(48,48,48)"/><rect x="727.6" y="90.2" width="1" height="1" fill="rgb(30,30,30)"/><rect x="821.7" y="146.1" width="1" height="1" fill="rgb(48,48,48)"/><rect x="711.1" y="211.5" width="1" height="1" fill="rgb(48,48,48)"/><rect x="812.6" y="196.4" width="1" height="1" fill="rgb(34,34,34)"/><rect x="895.9" y="184.5" width="1" height="1" fill="rgb(48,48,48)"/><rect x="906.3" y="200.0" width="1" height="1" fill="rgb(48,48,48)"/><rect x="815.6" y="120.4" width="1" height="1" fill="rgb(26,26,26)"/><rect x="833.3" y="153.3" width="1" height="1" fill="rgb(30,30,30)"/><rect x="716.5" y="189.3" width="1" height="1" fill="rgb(34,34,34)"/><rect x="711.2" y="145.4" width="1" height="1" fill="rgb(48,48,48)"/><rect x="829.7" y="123.5" width="1" height="1" fill="rgb(34,34,34)"/><rect x="784.7" y="89.9" width="1" height="1" fill="rgb(60,60,60)"/><rect x="762.3" y="185.6" width="1" height="1" fill="rgb(60,60,60)"/><rect x="693.0" y="182.6" width="1" height="1" fill="rgb(60,60,60)"/><rect x="640.3" y="208.5" width="1" height="1" fill="rgb(22,22,22)"/><rect x="648.7" y="166.3" width="1" height="1" fill="rgb(26,26,26)"/><rect x="856.2" y="225.9" width="1" height="1" fill="rgb(26,26,26)"/><rect x="795.9" y="101.8" width="1" height="1" fill="rgb(40,40,40)"/><rect x="776.8" y="116.9" width="1" height="1" fill="rgb(34,34,34)"/><rect x="793.7" y="180.3" width="1" height="1" fill="rgb(60,60,60)"/><rect x="750.2" y="137.1" width="1" height="1" fill="rgb(48,48,48)"/><rect x="927.1" y="117.7" width="1" height="1" fill="rgb(48,48,48)"/><rect x="693.2" y="162.0" width="1" height="1" fill="rgb(22,22,22)"/><rect x="860.1" y="176.6" width="1" height="1" fill="rgb(48,48,48)"/><rect x="654.3" y="127.1" width="1" height="1" fill="rgb(34,34,34)"/><rect x="655.8" y="98.0" width="1" height="1" fill="rgb(34,34,34)"/><rect x="829.3" y="185.5" width="1" height="1" fill="rgb(40,40,40)"/><rect x="718.1" y="119.8" width="1" height="1" fill="rgb(48,48,48)"/><rect x="759.5" y="226.2" width="1" height="1" fill="rgb(26,26,26)"/><rect x="941.2" y="227.3" width="1" height="1" fill="rgb(34,34,34)"/><rect x="701.9" y="105.9" width="1" height="1" fill="rgb(60,60,60)"/><rect x="658.1" y="203.6" width="1" height="1" fill="rgb(26,26,26)"/><rect x="780.6" y="169.1" width="1" height="1" fill="rgb(26,26,26)"/><rect x="886.3" y="108.4" width="1" height="1" fill="rgb(48,48,48)"/><rect x="832.5" y="206.5" width="1" height="1" fill="rgb(60,60,60)"/><rect x="763.5" y="232.4" width="1" height="1" fill="rgb(60,60,60)"/><rect x="804.8" y="105.3" width="1" height="1" fill="rgb(60,60,60)"/><rect x="780.6" y="201.4" width="1" height="1" fill="rgb(26,26,26)"/><rect x="718.8" y="141.9" width="1" height="1" fill="rgb(30,30,30)"/><rect x="937.8" y="186.1" width="1" height="1" fill="rgb(34,34,34)"/><rect x="637.8" y="192.4" width="1" height="1" fill="rgb(30,30,30)"/><rect x="746.5" y="182.5" width="1" height="1" fill="rgb(30,30,30)"/><rect x="783.7" y="149.6" width="1" height="1" fill="rgb(48,48,48)"/><rect x="663.1" y="218.0" width="1" height="1" fill="rgb(26,26,26)"/><rect x="921.2" y="211.7" width="1" height="1" fill="rgb(22,22,22)"/><rect x="663.1" y="169.4" width="1" height="1" fill="rgb(30,30,30)"/><rect x="876.9" y="107.5" width="1" height="1" fill="rgb(60,60,60)"/><rect x="742.6" y="172.0" width="1" height="1" fill="rgb(48,48,48)"/><rect x="640.5" y="226.0" width="1" height="1" fill="rgb(48,48,48)"/><rect x="726.7" y="175.8" width="1" height="1" fill="rgb(40,40,40)"/><rect x="680.7" y="121.1" width="1" height="1" fill="rgb(60,60,60)"/><rect x="775.3" y="201.6" width="1" height="1" fill="rgb(26,26,26)"/><rect x="913.7" y="202.6" width="1" height="1" fill="rgb(26,26,26)"/><rect x="823.5" y="187.5" width="1" height="1" fill="rgb(60,60,60)"/><rect x="664.7" y="218.6" width="1" height="1" fill="rgb(40,40,40)"/><rect x="878.2" y="209.5" width="1" height="1" fill="rgb(26,26,26)"/><rect x="788.3" y="118.1" width="1" height="1" fill="rgb(22,22,22)"/><rect x="864.0" y="151.0" width="1" height="1" fill="rgb(22,22,22)"/><rect x="806.8" y="125.6" width="1" height="1" fill="rgb(26,26,26)"/><rect x="890.1" y="156.1" width="1" height="1" fill="rgb(40,40,40)"/><rect x="654.9" y="155.2" width="1" height="1" fill="rgb(26,26,26)"/><rect x="851.3" y="123.0" width="1" height="1" fill="rgb(26,26,26)"/><rect x="802.1" y="213.0" width="1" height="1" fill="rgb(22,22,22)"/><rect x="686.1" y="133.8" width="1" height="1" fill="rgb(48,48,48)"/><rect x="809.1" y="184.1" width="1" height="1" fill="rgb(60,60,60)"/><rect x="779.5" y="149.2" width="1" height="1" fill="rgb(48,48,48)"/><rect x="660.1" y="180.0" width="1" height="1" fill="rgb(48,48,48)"/><rect x="834.8" y="90.0" width="1" height="1" fill="rgb(22,22,22)"/><rect x="845.9" y="223.0" width="1" height="1" fill="rgb(30,30,30)"/><rect x="884.4" y="100.7" width="1" height="1" fill="rgb(34,34,34)"/><rect x="785.3" y="218.0" width="1" height="1" fill="rgb(22,22,22)"/><rect x="702.3" y="147.7" width="1" height="1" fill="rgb(26,26,26)"/><rect x="740.6" y="212.8" width="1" height="1" fill="rgb(30,30,30)"/><rect x="741.4" y="200.7" width="1" height="1" fill="rgb(40,40,40)"/><rect x="872.8" y="117.8" width="1" height="1" fill="rgb(34,34,34)"/><rect x="741.6" y="123.7" width="1" height="1" fill="rgb(22,22,22)"/><rect x="890.0" y="129.8" width="1" height="1" fill="rgb(60,60,60)"/><rect x="788.1" y="135.7" width="1" height="1" fill="rgb(30,30,30)"/><rect x="904.1" y="137.3" width="1" height="1" fill="rgb(26,26,26)"/><rect x="837.3" y="202.6" width="1" height="1" fill="rgb(30,30,30)"/><rect x="695.8" y="191.1" width="1" height="1" fill="rgb(26,26,26)"/><rect x="816.5" y="179.7" width="1" height="1" fill="rgb(60,60,60)"/><rect x="941.9" y="145.2" width="1" height="1" fill="rgb(40,40,40)"/><rect x="908.0" y="166.6" width="1" height="1" fill="rgb(22,22,22)"/><rect x="758.9" y="102.8" width="1" height="1" fill="rgb(22,22,22)"/><rect x="695.1" y="221.5" width="1" height="1" fill="rgb(40,40,40)"/><rect x="871.4" y="95.8" width="1" height="1" fill="rgb(40,40,40)"/><rect x="915.4" y="176.3" width="1" height="1" fill="rgb(40,40,40)"/><rect x="682.0" y="185.4" width="1" height="1" fill="rgb(48,48,48)"/><rect x="819.5" y="186.4" width="1" height="1" fill="rgb(26,26,26)"/><rect x="649.1" y="179.5" width="1" height="1" fill="rgb(48,48,48)"/><rect x="870.4" y="101.8" width="1" height="1" fill="rgb(26,26,26)"/><rect x="903.0" y="148.5" width="1" height="1" fill="rgb(22,22,22)"/><rect x="916.7" y="182.7" width="1" height="1" fill="rgb(30,30,30)"/><rect x="903.8" y="107.2" width="1" height="1" fill="rgb(30,30,30)"/><rect x="809.0" y="124.7" width="1" height="1" fill="rgb(30,30,30)"/><rect x="693.5" y="92.0" width="1" height="1" fill="rgb(22,22,22)"/><rect x="768.8" y="180.7" width="1" height="1" fill="rgb(22,22,22)"/><rect x="789.3" y="163.2" width="1" height="1" fill="rgb(60,60,60)"/><rect x="673.4" y="205.3" width="1" height="1" fill="rgb(40,40,40)"/><rect x="849.9" y="146.1" width="1" height="1" fill="rgb(22,22,22)"/><rect x="641.3" y="143.5" width="1" height="1" fill="rgb(40,40,40)"/><rect x="940.9" y="183.3" width="1" height="1" fill="rgb(26,26,26)"/><rect x="782.5" y="147.2" width="1" height="1" fill="rgb(22,22,22)"/><rect x="662.4" y="155.9" width="1" height="1" fill="rgb(26,26,26)"/><rect x="828.8" y="149.3" width="1" height="1" fill="rgb(22,22,22)"/><rect x="846.2" y="104.8" width="1" height="1" fill="rgb(60,60,60)"/><rect x="664.0" y="214.0" width="1" height="1" fill="rgb(26,26,26)"/><rect x="781.5" y="127.2" width="1" height="1" fill="rgb(40,40,40)"/><rect x="711.1" y="194.1" width="1" height="1" fill="rgb(26,26,26)"/><rect x="919.4" y="140.4" width="1" height="1" fill="rgb(48,48,48)"/><rect x="855.3" y="211.9" width="1" height="1" fill="rgb(48,48,48)"/><rect x="869.4" y="129.8" width="1" height="1" fill="rgb(40,40,40)"/><rect x="854.0" y="154.2" width="1" height="1" fill="rgb(30,30,30)"/><rect x="916.5" y="94.7" width="1" height="1" fill="rgb(22,22,22)"/><rect x="640.5" y="89.2" width="1" height="1" fill="rgb(48,48,48)"/><rect x="847.1" y="177.3" width="1" height="1" fill="rgb(34,34,34)"/><rect x="732.2" y="193.5" width="1" height="1" fill="rgb(26,26,26)"/><rect x="930.1" y="208.9" width="1" height="1" fill="rgb(40,40,40)"/><rect x="655.3" y="140.7" width="1" height="1" fill="rgb(40,40,40)"/><rect x="859.7" y="155.6" width="1" height="1" fill="rgb(26,26,26)"/><rect x="681.3" y="203.4" width="1" height="1" fill="rgb(30,30,30)"/><rect x="928.9" y="110.9" width="1" height="1" fill="rgb(60,60,60)"/><rect x="764.9" y="143.3" width="1" height="1" fill="rgb(60,60,60)"/><rect x="775.5" y="126.7" width="1" height="1" fill="rgb(60,60,60)"/><rect x="810.4" y="129.7" width="1" height="1" fill="rgb(22,22,22)"/><rect x="827.3" y="182.0" width="1" height="1" fill="rgb(60,60,60)"/><rect x="890.2" y="135.5" width="1" height="1" fill="rgb(40,40,40)"/><rect x="859.1" y="89.3" width="1" height="1" fill="rgb(26,26,26)"/><rect x="820.9" y="132.1" width="1" height="1" fill="rgb(34,34,34)"/><rect x="935.8" y="122.9" width="1" height="1" fill="rgb(34,34,34)"/><rect x="846.6" y="174.9" width="1" height="1" fill="rgb(26,26,26)"/><rect x="884.1" y="128.4" width="1" height="1" fill="rgb(22,22,22)"/><rect x="735.4" y="126.1" width="1" height="1" fill="rgb(26,26,26)"/><rect x="816.5" y="206.1" width="1" height="1" fill="rgb(60,60,60)"/><rect x="649.9" y="208.7" width="1" height="1" fill="rgb(60,60,60)"/><rect x="909.5" y="232.0" width="1" height="1" fill="rgb(26,26,26)"/><rect x="720.8" y="211.3" width="1" height="1" fill="rgb(60,60,60)"/><rect x="804.6" y="200.4" width="1" height="1" fill="rgb(34,34,34)"/><rect x="743.1" y="99.4" width="1" height="1" fill="rgb(40,40,40)"/><rect x="785.3" y="142.7" width="1" height="1" fill="rgb(60,60,60)"/><rect x="866.6" y="223.0" width="1" height="1" fill="rgb(26,26,26)"/><rect x="731.7" y="95.4" width="1" height="1" fill="rgb(34,34,34)"/><rect x="779.4" y="117.2" width="1" height="1" fill="rgb(30,30,30)"/><rect x="816.4" y="88.4" width="1" height="1" fill="rgb(34,34,34)"/><rect x="777.7" y="99.8" width="1" height="1" fill="rgb(60,60,60)"/><rect x="745.7" y="96.1" width="1" height="1" fill="rgb(34,34,34)"/><rect x="814.4" y="218.0" width="1" height="1" fill="rgb(60,60,60)"/><rect x="796.7" y="156.6" width="1" height="1" fill="rgb(40,40,40)"/><rect x="698.8" y="118.1" width="1" height="1" fill="rgb(22,22,22)"/><rect x="692.3" y="189.4" width="1" height="1" fill="rgb(30,30,30)"/><rect x="813.8" y="139.4" width="1" height="1" fill="rgb(60,60,60)"/><rect x="795.3" y="108.8" width="1" height="1" fill="rgb(22,22,22)"/><rect x="919.3" y="159.0" width="1" height="1" fill="rgb(60,60,60)"/><rect x="669.5" y="179.4" width="1" height="1" fill="rgb(60,60,60)"/><rect x="662.0" y="133.1" width="1" height="1" fill="rgb(22,22,22)"/><rect x="742.5" y="162.8" width="1" height="1" fill="rgb(22,22,22)"/><rect x="665.8" y="116.9" width="1" height="1" fill="rgb(60,60,60)"/><rect x="902.0" y="158.0" width="1" height="1" fill="rgb(40,40,40)"/><rect x="702.4" y="222.1" width="1" height="1" fill="rgb(30,30,30)"/><rect x="767.3" y="225.2" width="1" height="1" fill="rgb(60,60,60)"/><rect x="818.5" y="175.9" width="1" height="1" fill="rgb(26,26,26)"/><rect x="714.7" y="92.5" width="1" height="1" fill="rgb(26,26,26)"/><rect x="941.4" y="142.2" width="1" height="1" fill="rgb(22,22,22)"/><rect x="652.6" y="168.4" width="1" height="1" fill="rgb(60,60,60)"/><rect x="852.9" y="158.1" width="1" height="1" fill="rgb(60,60,60)"/><rect x="915.4" y="96.4" width="1" height="1" fill="rgb(40,40,40)"/><rect x="832.8" y="221.6" width="1" height="1" fill="rgb(48,48,48)"/><rect x="930.5" y="124.6" width="1" height="1" fill="rgb(40,40,40)"/><rect x="708.4" y="100.1" width="1" height="1" fill="rgb(48,48,48)"/><rect x="792.0" y="113.7" width="1" height="1" fill="rgb(60,60,60)"/><rect x="685.9" y="228.0" width="1" height="1" fill="rgb(48,48,48)"/><rect x="704.8" y="92.6" width="1" height="1" fill="rgb(30,30,30)"/><rect x="925.0" y="95.7" width="1" height="1" fill="rgb(40,40,40)"/><rect x="913.8" y="209.2" width="1" height="1" fill="rgb(22,22,22)"/><rect x="715.9" y="161.9" width="1" height="1" fill="rgb(48,48,48)"/><rect x="834.9" y="230.9" width="1" height="1" fill="rgb(22,22,22)"/><rect x="667.9" y="133.4" width="1" height="1" fill="rgb(22,22,22)"/><rect x="924.5" y="185.8" width="1" height="1" fill="rgb(30,30,30)"/><rect x="817.5" y="151.4" width="1" height="1" fill="rgb(48,48,48)"/><rect x="669.3" y="134.3" width="1" height="1" fill="rgb(30,30,30)"/><rect x="756.4" y="141.7" width="1" height="1" fill="rgb(34,34,34)"/><rect x="688.6" y="121.8" width="1" height="1" fill="rgb(26,26,26)"/><rect x="916.8" y="217.3" width="1" height="1" fill="rgb(34,34,34)"/><rect x="856.5" y="115.5" width="1" height="1" fill="rgb(22,22,22)"/><rect x="685.0" y="208.6" width="1" height="1" fill="rgb(22,22,22)"/><rect x="922.8" y="213.5" width="1" height="1" fill="rgb(48,48,48)"/></svg>
<!-- ============ Ultimatte2 panel ============ -->
<div class="a" style="left:128px;top:256px;width:264px;height:225px;background:#262626;box-shadow:1px 1px 1px rgba(0,0,0,0.35)"></div><div class="a" style="left:129px;top:257px;width:262px;height:223px;background:#ececec"></div><div class="a" style="left:130px;top:257px;width:260px;height:10px;background:linear-gradient(#f2f2f2,#e4e4e4)"></div><div class="a" style="left:130px;top:267px;width:260px;height:1px;background:#c4c4c4"></div><div class="a" style="left:131px;top:268px;width:258px;height:210px;background:#dcdcdc"></div><svg class="a" style="left:130px;top:258px" width="22" height="10" viewBox="0 0 22 10"><path d="M1.3 0.8 L8.3 8.3" stroke="#111" stroke-width="1.7" fill="none"/><path d="M8.3 0.8 L1.3 8.3" stroke="#222" stroke-width="0.7" fill="none"/><path d="M9.8 5 H12" stroke="#222" stroke-width="1" fill="none"/><path d="M12.8 2.5 V6.8 M16.8 2.5 V6.8 M12.8 4.3 H16.8 M12.8 6 H16.8" stroke="#222" stroke-width="1" fill="none"/></svg><div class="t mono" style="left:150px;top:258px;font-size:7px;font-weight:bold;line-height:9px;color:#000;text-shadow:0.35px 0 0 #000">Ultimatte2</div><div class="a" style="left:380px;top:257px;width:10px;height:10px;background:#d8d8d8;border:1px solid #999;border-top-color:#f4f4f4;border-left-color:#f4f4f4"></div>
<svg class="a" style="left:380px;top:257px" width="10" height="10"><path d="M2.5 2.5 L7.5 7.5 M7.5 2.5 L2.5 7.5" stroke="#111" stroke-width="1.6"/></svg><div class="t" style="right:771px;top:272px;font-size:7.6px;line-height:8px;color:#262626;text-align:right">channels</div><div class="a" style="left:192px;top:270px;width:37px;height:9px;background:#fff"></div>
<div class="t" style="left:194px;top:271px;font-size:8px;line-height:8px;color:#333;">r</div>
<svg class="a" style="left:220px;top:272px" width="7" height="5"><path d="M0 0.5 H7 L3.5 4.5Z" fill="#111"/></svg><div class="a" style="left:232px;top:270px;width:37px;height:9px;background:#fff"></div>
<div class="t" style="left:234px;top:271px;font-size:8px;line-height:8px;color:#333;">g</div>
<svg class="a" style="left:260px;top:272px" width="7" height="5"><path d="M0 0.5 H7 L3.5 4.5Z" fill="#111"/></svg><div class="a" style="left:270px;top:270px;width:37px;height:9px;background:#fff"></div>
<div class="t" style="left:272px;top:271px;font-size:8px;line-height:8px;color:#333;">b</div>
<svg class="a" style="left:298px;top:272px" width="7" height="5"><path d="M0 0.5 H7 L3.5 4.5Z" fill="#111"/></svg><div class="a" style="left:311px;top:270px;width:37px;height:9px;background:#fff"></div>
<div class="t" style="left:313px;top:271px;font-size:8px;line-height:8px;color:#333;">a</div>
<svg class="a" style="left:339px;top:272px" width="7" height="5"><path d="M0 0.5 H7 L3.5 4.5Z" fill="#111"/></svg><div class="t" style="right:771px;top:282px;font-size:7.6px;line-height:8px;color:#262626;text-align:right">Backing Color</div><div class="a" style="left:192px;top:280px;width:36px;height:9px;background:#fff"></div><div class="t" style="left:194px;top:282px;font-size:7.6px;line-height:8px;color:#222;">0</div><div class="a" style="left:228px;top:280px;width:10px;height:10px;background:#c2dcc2;border-left:1px solid #e8f4e8;border-right:1px solid #a8c4a8"></div><svg class="a" style="left:228px;top:280px" width="10" height="10"><path d="M1.5 8 Q3.8 8.2 4.3 5 Q4.8 2 7 2" stroke="#1e4a1e" stroke-width="1.2" fill="none"/><path d="M7 1.5 V9 M1.5 2.5 H3.2" stroke="#1e4a1e" stroke-width="1" fill="none"/></svg><div class="a" style="left:240px;top:280px;width:105px;height:10px;background:#e4e4e4"></div><div class="a" style="left:242px;top:281px;width:101px;height:3px;background:repeating-linear-gradient(to right,#aaa 0,#aaa 1px,transparent 1px,transparent 10px)"></div><div class="a" style="left:240px;top:284px;width:50px;height:3px;background:#0a0a0a"></div><div class="a" style="left:296px;top:284px;width:49px;height:3px;background:#0a0a0a"></div><div class="a" style="left:290px;top:280px;width:6px;height:10px;background:#ececec;border:1px solid #c0c0c0;border-top-color:#fafafa;border-left-color:#fafafa"></div><div class="a" style="left:345px;top:280px;width:12px;height:9px;background:#fff"></div><div class="t" style="left:347px;top:282px;font-size:7.6px;line-height:8px;color:#222;">3</div><div class="a" style="left:358px;top:281px;width:10px;height:9px;background:#b8b8b8"></div><svg class="a" style="left:358px;top:281px" width="10" height="9"><path d="M2 7 L8 1" stroke="#222" stroke-width="1.5"/></svg><svg class="a" style="left:368px;top:281px" width="10" height="9"><rect x="1" y="0" width="2" height="9" fill="#403a20"/><rect x="4" y="0" width="2" height="9" fill="#2a3a2a"/><rect x="7" y="0" width="2" height="9" fill="#1a2a40"/><path d="M0 2 H10 M0 5 H10" stroke="#ddd" stroke-width="0.8"/></svg><svg class="a" style="left:192px;top:291px" width="9" height="9"><path d="M1 4.5 L3.5 7 L8 1.5" stroke="#111" stroke-width="1.5" fill="none"/></svg><div class="t" style="left:202px;top:291px;font-size:7.6px;line-height:8px;color:#262626;">generate matte</div><div class="t" style="right:771px;top:301px;font-size:7.6px;line-height:8px;color:#262626;text-align:right">Matte Density</div><div class="a" style="left:192px;top:299px;width:36px;height:9px;background:#fff"></div><div class="t" style="left:194px;top:301px;font-size:7.6px;line-height:8px;color:#222;">1</div><div class="a" style="left:228px;top:299px;width:10px;height:10px;background:#c2dcc2;border-left:1px solid #e8f4e8;border-right:1px solid #a8c4a8"></div><svg class="a" style="left:228px;top:299px" width="10" height="10"><path d="M1.5 8 Q3.8 8.2 4.3 5 Q4.8 2 7 2" stroke="#1e4a1e" stroke-width="1.2" fill="none"/><path d="M7 1.5 V9 M1.5 2.5 H3.2" stroke="#1e4a1e" stroke-width="1" fill="none"/></svg><div class="a" style="left:240px;top:299px;width:106px;height:10px;background:#e4e4e4"></div><div class="a" style="left:242px;top:300px;width:102px;height:3px;background:repeating-linear-gradient(to right,#aaa 0,#aaa 1px,transparent 1px,transparent 10px)"></div><div class="a" style="left:240px;top:303px;width:100px;height:3px;background:#0a0a0a"></div><div class="a" style="left:340px;top:299px;width:6px;height:10px;background:#ececec;border:1px solid #c0c0c0;border-top-color:#fafafa;border-left-color:#fafafa"></div><div class="t" style="right:771px;top:311px;font-size:7.6px;line-height:8px;color:#262626;text-align:right">Black Gloss</div><div class="a" style="left:192px;top:309px;width:36px;height:9px;background:#fff"></div><div class="t" style="left:194px;top:311px;font-size:7.6px;line-height:8px;color:#222;">0</div><div class="a" style="left:228px;top:309px;width:10px;height:10px;background:#c2dcc2;border-left:1px solid #e8f4e8;border-right:1px solid #a8c4a8"></div><svg class="a" style="left:228px;top:309px" width="10" height="10"><path d="M1.5 8 Q3.8 8.2 4.3 5 Q4.8 2 7 2" stroke="#1e4a1e" stroke-width="1.2" fill="none"/><path d="M7 1.5 V9 M1.5 2.5 H3.2" stroke="#1e4a1e" stroke-width="1" fill="none"/></svg><div class="a" style="left:240px;top:309px;width:106px;height:10px;background:#e4e4e4"></div><div class="a" style="left:242px;top:310px;width:102px;height:3px;background:repeating-linear-gradient(to right,#aaa 0,#aaa 1px,transparent 1px,transparent 10px)"></div><div class="a" style="left:246px;top:313px;width:100px;height:3px;background:#0a0a0a"></div><div class="a" style="left:240px;top:309px;width:6px;height:10px;background:#ececec;border:1px solid #c0c0c0;border-top-color:#fafafa;border-left-color:#fafafa"></div><div class="t" style="right:771px;top:321px;font-size:7.6px;line-height:8px;color:#262626;text-align:right">Density Balance</div><div class="a" style="left:192px;top:319px;width:36px;height:9px;background:#fff"></div><div class="t" style="left:194px;top:321px;font-size:7.6px;line-height:8px;color:#222;">0</div><div class="a" style="left:228px;top:319px;width:10px;height:10px;background:#c2dcc2;border-left:1px solid #e8f4e8;border-right:1px solid #a8c4a8"></div><svg class="a" style="left:228px;top:319px" width="10" height="10"><path d="M1.5 8 Q3.8 8.2 4.3 5 Q4.8 2 7 2" stroke="#1e4a1e" stroke-width="1.2" fill="none"/><path d="M7 1.5 V9 M1.5 2.5 H3.2" stroke="#1e4a1e" stroke-width="1" fill="none"/></svg><div class="a" style="left:240px;top:319px;width:106px;height:10px;background:#e4e4e4"></div><div class="a" style="left:242px;top:320px;width:102px;height:3px;background:repeating-linear-gradient(to right,#aaa 0,#aaa 1px,transparent 1px,transparent 10px)"></div><div class="a" style="left:246px;top:323px;width:100px;height:3px;background:#0a0a0a"></div><div class="a" style="left:240px;top:319px;width:6px;height:10px;background:#ececec;border:1px solid #c0c0c0;border-top-color:#fafafa;border-left-color:#fafafa"></div><div class="t" style="right:771px;top:331px;font-size:7.6px;line-height:8px;color:#262626;text-align:right">Color Density</div><div class="a" style="left:192px;top:329px;width:36px;height:9px;background:#fff"></div><div class="t" style="left:194px;top:331px;font-size:7.6px;line-height:8px;color:#222;">0</div><div class="a" style="left:228px;top:329px;width:10px;height:10px;background:#c2dcc2;border-left:1px solid #e8f4e8;border-right:1px solid #a8c4a8"></div><svg class="a" style="left:228px;top:329px" width="10" height="10"><path d="M1.5 8 Q3.8 8.2 4.3 5 Q4.8 2 7 2" stroke="#1e4a1e" stroke-width="1.2" fill="none"/><path d="M7 1.5 V9 M1.5 2.5 H3.2" stroke="#1e4a1e" stroke-width="1" fill="none"/></svg><div class="a" style="left:240px;top:329px;width:106px;height:10px;background:#e4e4e4"></div><div class="a" style="left:242px;top:330px;width:102px;height:3px;background:repeating-linear-gradient(to right,#aaa 0,#aaa 1px,transparent 1px,transparent 10px)"></div><div class="a" style="left:246px;top:333px;width:100px;height:3px;background:#0a0a0a"></div><div class="a" style="left:240px;top:329px;width:6px;height:10px;background:#ececec;border:1px solid #c0c0c0;border-top-color:#fafafa;border-left-color:#fafafa"></div><div class="t" style="right:771px;top:340px;font-size:7.6px;line-height:8px;color:#262626;text-align:right">Shadow Noise</div><div class="a" style="left:192px;top:338px;width:36px;height:9px;background:#fff"></div><div class="t" style="left:194px;top:340px;font-size:7.6px;line-height:8px;color:#222;">0</div><div class="a" style="left:228px;top:338px;width:10px;height:10px;background:#c2dcc2;border-left:1px solid #e8f4e8;border-right:1px solid #a8c4a8"></div><svg class="a" style="left:228px;top:338px" width="10" height="10"><path d="M1.5 8 Q3.8 8.2 4.3 5 Q4.8 2 7 2" stroke="#1e4a1e" stroke-width="1.2" fill="none"/><path d="M7 1.5 V9 M1.5 2.5 H3.2" stroke="#1e4a1e" stroke-width="1" fill="none"/></svg><div class="a" style="left:240px;top:338px;width:106px;height:10px;background:#e4e4e4"></div><div class="a" style="left:242px;top:339px;width:102px;height:3px;background:repeating-linear-gradient(to right,#aaa 0,#aaa 1px,transparent 1px,transparent 10px)"></div><div class="a" style="left:246px;top:342px;width:100px;height:3px;background:#0a0a0a"></div><div class="a" style="left:240px;top:338px;width:6px;height:10px;background:#ececec;border:1px solid #c0c0c0;border-top-color:#fafafa;border-left-color:#fafafa"></div><div class="t" style="right:771px;top:350px;font-size:7.6px;line-height:8px;color:#262626;text-align:right">Backing Purity</div><div class="a" style="left:192px;top:348px;width:36px;height:9px;background:#fff"></div><div class="t" style="left:194px;top:350px;font-size:7.6px;line-height:8px;color:#222;">1</div><div class="a" style="left:228px;top:348px;width:10px;height:10px;background:#c2dcc2;border-left:1px solid #e8f4e8;border-right:1px solid #a8c4a8"></div><svg class="a" style="left:228px;top:348px" width="10" height="10"><path d="M1.5 8 Q3.8 8.2 4.3 5 Q4.8 2 7 2" stroke="#1e4a1e" stroke-width="1.2" fill="none"/><path d="M7 1.5 V9 M1.5 2.5 H3.2" stroke="#1e4a1e" stroke-width="1" fill="none"/></svg><div class="a" style="left:240px;top:348px;width:106px;height:10px;background:#e4e4e4"></div><div class="a" style="left:242px;top:349px;width:102px;height:3px;background:repeating-linear-gradient(to right,#aaa 0,#aaa 1px,transparent 1px,transparent 10px)"></div><div class="a" style="left:240px;top:352px;width:100px;height:3px;background:#0a0a0a"></div><div class="a" style="left:340px;top:348px;width:6px;height:10px;background:#ececec;border:1px solid #c0c0c0;border-top-color:#fafafa;border-left-color:#fafafa"></div><div class="a" style="left:193px;top:360px;width:8px;height:8px;background:#fff"></div><div class="t" style="left:202px;top:360px;font-size:7.6px;line-height:8px;color:#262626;">Screen subtraction</div><div class="t" style="left:192px;top:370px;font-size:7.6px;line-height:8px;color:#262626;">Flare suppression:</div><div class="t" style="right:771px;top:380px;font-size:7.6px;line-height:8px;color:#262626;text-align:right">White Balance</div><div class="a" style="left:192px;top:378px;width:36px;height:9px;background:#fff"></div><div class="t" style="left:194px;top:380px;font-size:7.6px;line-height:8px;color:#222;">0</div><div class="a" style="left:228px;top:378px;width:10px;height:10px;background:#c2dcc2;border-left:1px solid #e8f4e8;border-right:1px solid #a8c4a8"></div><svg class="a" style="left:228px;top:378px" width="10" height="10"><path d="M1.5 8 Q3.8 8.2 4.3 5 Q4.8 2 7 2" stroke="#1e4a1e" stroke-width="1.2" fill="none"/><path d="M7 1.5 V9 M1.5 2.5 H3.2" stroke="#1e4a1e" stroke-width="1" fill="none"/></svg><div class="a" style="left:240px;top:378px;width:106px;height:10px;background:#e4e4e4"></div><div class="a" style="left:242px;top:379px;width:102px;height:3px;background:repeating-linear-gradient(to right,#aaa 0,#aaa 1px,transparent 1px,transparent 10px)"></div><div class="a" style="left:246px;top:382px;width:100px;height:3px;background:#0a0a0a"></div><div class="a" style="left:240px;top:378px;width:6px;height:10px;background:#ececec;border:1px solid #c0c0c0;border-top-color:#fafafa;border-left-color:#fafafa"></div><div class="t" style="right:771px;top:390px;font-size:7.6px;line-height:8px;color:#262626;text-align:right">Black Balance</div><div class="a" style="left:192px;top:388px;width:36px;height:9px;background:#fff"></div><div class="t" style="left:194px;top:390px;font-size:7.6px;line-height:8px;color:#222;">0</div><div class="a" style="left:228px;top:388px;width:10px;height:10px;background:#c2dcc2;border-left:1px solid #e8f4e8;border-right:1px solid #a8c4a8"></div><svg class="a" style="left:228px;top:388px" width="10" height="10"><path d="M1.5 8 Q3.8 8.2 4.3 5 Q4.8 2 7 2" stroke="#1e4a1e" stroke-width="1.2" fill="none"/><path d="M7 1.5 V9 M1.5 2.5 H3.2" stroke="#1e4a1e" stroke-width="1" fill="none"/></svg><div class="a" style="left:240px;top:388px;width:106px;height:10px;background:#e4e4e4"></div><div class="a" style="left:242px;top:389px;width:102px;height:3px;background:repeating-linear-gradient(to right,#aaa 0,#aaa 1px,transparent 1px,transparent 10px)"></div><div class="a" style="left:240px;top:392px;width:50px;height:3px;background:#0a0a0a"></div><div class="a" style="left:296px;top:392px;width:50px;height:3px;background:#0a0a0a"></div><div class="a" style="left:290px;top:388px;width:6px;height:10px;background:#ececec;border:1px solid #c0c0c0;border-top-color:#fafafa;border-left-color:#fafafa"></div><div class="t" style="right:771px;top:399px;font-size:7.6px;line-height:8px;color:#262626;text-align:right">Gate 1 or 3</div><div class="a" style="left:192px;top:397px;width:36px;height:9px;background:#fff"></div><div class="t" style="left:194px;top:399px;font-size:7.6px;line-height:8px;color:#222;">1</div><div class="a" style="left:228px;top:397px;width:10px;height:10px;background:#c2dcc2;border-left:1px solid #e8f4e8;border-right:1px solid #a8c4a8"></div><svg class="a" style="left:228px;top:397px" width="10" height="10"><path d="M1.5 8 Q3.8 8.2 4.3 5 Q4.8 2 7 2" stroke="#1e4a1e" stroke-width="1.2" fill="none"/><path d="M7 1.5 V9 M1.5 2.5 H3.2" stroke="#1e4a1e" stroke-width="1" fill="none"/></svg><div class="a" style="left:240px;top:397px;width:106px;height:10px;background:#e4e4e4"></div><div class="a" style="left:242px;top:398px;width:102px;height:3px;background:repeating-linear-gradient(to right,#aaa 0,#aaa 1px,transparent 1px,transparent 10px)"></div><div class="a" style="left:240px;top:401px;width:100px;height:3px;background:#0a0a0a"></div><div class="a" style="left:340px;top:397px;width:6px;height:10px;background:#ececec;border:1px solid #c0c0c0;border-top-color:#fafafa;border-left-color:#fafafa"></div><div class="t" style="right:771px;top:409px;font-size:7.6px;line-height:8px;color:#262626;text-align:right">Gate 2</div><div class="a" style="left:192px;top:407px;width:36px;height:9px;background:#fff"></div><div class="t" style="left:194px;top:409px;font-size:7.6px;line-height:8px;color:#222;">0</div><div class="a" style="left:228px;top:407px;width:10px;height:10px;background:#c2dcc2;border-left:1px solid #e8f4e8;border-right:1px solid #a8c4a8"></div><svg class="a" style="left:228px;top:407px" width="10" height="10"><path d="M1.5 8 Q3.8 8.2 4.3 5 Q4.8 2 7 2" stroke="#1e4a1e" stroke-width="1.2" fill="none"/><path d="M7 1.5 V9 M1.5 2.5 H3.2" stroke="#1e4a1e" stroke-width="1" fill="none"/></svg><div class="a" style="left:240px;top:407px;width:106px;height:10px;background:#e4e4e4"></div><div class="a" style="left:242px;top:408px;width:102px;height:3px;background:repeating-linear-gradient(to right,#aaa 0,#aaa 1px,transparent 1px,transparent 10px)"></div><div class="a" style="left:246px;top:411px;width:100px;height:3px;background:#0a0a0a"></div><div class="a" style="left:240px;top:407px;width:6px;height:10px;background:#ececec;border:1px solid #c0c0c0;border-top-color:#fafafa;border-left-color:#fafafa"></div><div class="t" style="right:771px;top:430px;font-size:7.6px;line-height:8px;color:#262626;text-align:right">FG Clean Up</div><div class="a" style="left:192px;top:428px;width:36px;height:9px;background:#fff"></div><div class="t" style="left:194px;top:430px;font-size:7.6px;line-height:8px;color:#222;">0</div><div class="a" style="left:228px;top:428px;width:10px;height:10px;background:#c2dcc2;border-left:1px solid #e8f4e8;border-right:1px solid #a8c4a8"></div><svg class="a" style="left:228px;top:428px" width="10" height="10"><path d="M1.5 8 Q3.8 8.2 4.3 5 Q4.8 2 7 2" stroke="#1e4a1e" stroke-width="1.2" fill="none"/><path d="M7 1.5 V9 M1.5 2.5 H3.2" stroke="#1e4a1e" stroke-width="1" fill="none"/></svg><div class="a" style="left:240px;top:428px;width:106px;height:10px;background:#e4e4e4"></div><div class="a" style="left:242px;top:429px;width:102px;height:3px;background:repeating-linear-gradient(to right,#aaa 0,#aaa 1px,transparent 1px,transparent 10px)"></div><div class="a" style="left:246px;top:432px;width:100px;height:3px;background:#0a0a0a"></div><div class="a" style="left:240px;top:428px;width:6px;height:10px;background:#ececec;border:1px solid #c0c0c0;border-top-color:#fafafa;border-left-color:#fafafa"></div><div class="t" style="right:771px;top:440px;font-size:7.6px;line-height:8px;color:#262626;text-align:right">BG Clean Up</div><div class="a" style="left:192px;top:438px;width:36px;height:9px;background:#fff"></div><div class="t" style="left:194px;top:440px;font-size:7.6px;line-height:8px;color:#222;">0</div><div class="a" style="left:228px;top:438px;width:10px;height:10px;background:#c2dcc2;border-left:1px solid #e8f4e8;border-right:1px solid #a8c4a8"></div><svg class="a" style="left:228px;top:438px" width="10" height="10"><path d="M1.5 8 Q3.8 8.2 4.3 5 Q4.8 2 7 2" stroke="#1e4a1e" stroke-width="1.2" fill="none"/><path d="M7 1.5 V9 M1.5 2.5 H3.2" stroke="#1e4a1e" stroke-width="1" fill="none"/></svg><div class="a" style="left:240px;top:438px;width:106px;height:10px;background:#e4e4e4"></div><div class="a" style="left:242px;top:439px;width:102px;height:3px;background:repeating-linear-gradient(to right,#aaa 0,#aaa 1px,transparent 1px,transparent 10px)"></div><div class="a" style="left:246px;top:442px;width:100px;height:3px;background:#0a0a0a"></div><div class="a" style="left:240px;top:438px;width:6px;height:10px;background:#ececec;border:1px solid #c0c0c0;border-top-color:#fafafa;border-left-color:#fafafa"></div><div class="a" style="left:130px;top:449px;width:260px;height:1px;background:#f4f4f4"></div><svg class="a" style="left:130px;top:449px" width="70" height="14"><path d="M2 13 V1 H37 L33 13 Z" fill="#e0e0e0" stroke="#b4b4b4" stroke-width="0.8"/><path d="M36 13 L40 1 H62 L58 13" fill="#dcdcdc" stroke="#b4b4b4" stroke-width="0.8"/></svg><div class="t" style="left:135px;top:452px;font-size:7.6px;line-height:8px;color:#333;">Ultimatte</div><div class="t" style="left:168px;top:452px;font-size:7.6px;line-height:8px;color:#333;">Node</div><div class="a" style="left:233px;top:461px;width:37px;height:12px;background:linear-gradient(#f0f0f0,#e0e0e0);border:1px solid #bcbcbc;border-top-color:#f8f8f8;border-left-color:#f8f8f8;box-shadow:1px 1px 0 #c8c8c8"></div>
<div class="t" style="left:233px;top:463px;width:37px;text-align:center;font-size:7.8px;line-height:8px;color:#222">Cancel</div><div class="a" style="left:272px;top:461px;width:36px;height:12px;background:linear-gradient(#f0f0f0,#e0e0e0);border:1px solid #bcbcbc;border-top-color:#f8f8f8;border-left-color:#f8f8f8;box-shadow:1px 1px 0 #c8c8c8"></div>
<div class="t" style="left:272px;top:463px;width:36px;text-align:center;font-size:7.8px;line-height:8px;color:#b8b8b8">Undo</div><div class="a" style="left:310px;top:461px;width:37px;height:12px;background:linear-gradient(#f0f0f0,#e0e0e0);border:1px solid #bcbcbc;border-top-color:#f8f8f8;border-left-color:#f8f8f8;box-shadow:1px 1px 0 #c8c8c8"></div>
<div class="t" style="left:310px;top:463px;width:37px;text-align:center;font-size:7.8px;line-height:8px;color:#b8b8b8">Set</div><div class="a" style="left:350px;top:461px;width:37px;height:12px;background:linear-gradient(#f0f0f0,#e0e0e0);border:1px solid #bcbcbc;border-top-color:#f8f8f8;border-left-color:#f8f8f8;box-shadow:1px 1px 0 #c8c8c8"></div>
<div class="t" style="left:350px;top:463px;width:37px;text-align:center;font-size:7.8px;line-height:8px;color:#222">OK</div>
<!-- ============ Bezier2 panel ============ -->
<div class="a" style="left:275px;top:509px;width:249px;height:103px;background:#262626;box-shadow:1px 1px 1px rgba(0,0,0,0.35)"></div><div class="a" style="left:276px;top:510px;width:247px;height:101px;background:#ececec"></div><div class="a" style="left:277px;top:510px;width:245px;height:10px;background:linear-gradient(#f2f2f2,#e4e4e4)"></div><div class="a" style="left:277px;top:520px;width:245px;height:1px;background:#c4c4c4"></div><div class="a" style="left:278px;top:521px;width:243px;height:88px;background:#dcdcdc"></div><svg class="a" style="left:277px;top:511px" width="22" height="10" viewBox="0 0 22 10"><path d="M1.3 0.8 L8.3 8.3" stroke="#111" stroke-width="1.7" fill="none"/><path d="M8.3 0.8 L1.3 8.3" stroke="#222" stroke-width="0.7" fill="none"/><path d="M9.8 5 H12" stroke="#222" stroke-width="1" fill="none"/><path d="M12.8 2.5 V6.8 M16.8 2.5 V6.8 M12.8 4.3 H16.8 M12.8 6 H16.8" stroke="#222" stroke-width="1" fill="none"/></svg><div class="t mono" style="left:297px;top:511px;font-size:7px;font-weight:bold;line-height:9px;color:#000;text-shadow:0.35px 0 0 #000">Bezier2</div><div class="a" style="left:513px;top:510px;width:10px;height:10px;background:#d8d8d8;border:1px solid #999;border-top-color:#f4f4f4;border-left-color:#f4f4f4"></div>
<svg class="a" style="left:513px;top:510px" width="10" height="10"><path d="M2.5 2.5 L7.5 7.5 M7.5 2.5 L2.5 7.5" stroke="#111" stroke-width="1.6"/></svg><div class="t" style="right:639px;top:523px;font-size:7.6px;line-height:8px;color:#262626;text-align:right">channel</div><div class="a" style="left:323px;top:521px;width:38px;height:9px;background:#fff"></div>
<div class="t" style="left:325px;top:522px;font-size:8px;line-height:8px;color:#333;">r</div>
<svg class="a" style="left:352px;top:523px" width="7" height="5"><path d="M0 0.5 H7 L3.5 4.5Z" fill="#111"/></svg><div class="a" style="left:362px;top:521px;width:38px;height:9px;background:#fff"></div>
<div class="t" style="left:364px;top:522px;font-size:8px;line-height:8px;color:#333;">g</div>
<svg class="a" style="left:391px;top:523px" width="7" height="5"><path d="M0 0.5 H7 L3.5 4.5Z" fill="#111"/></svg><div class="a" style="left:401px;top:521px;width:38px;height:9px;background:#fff"></div>
<div class="t" style="left:403px;top:522px;font-size:8px;line-height:8px;color:#333;">b</div>
<svg class="a" style="left:430px;top:523px" width="7" height="5"><path d="M0 0.5 H7 L3.5 4.5Z" fill="#111"/></svg><div class="a" style="left:441px;top:521px;width:38px;height:9px;background:#fff"></div>
<div class="t" style="left:443px;top:522px;font-size:8px;line-height:8px;color:#333;">a</div>
<svg class="a" style="left:470px;top:523px" width="7" height="5"><path d="M0 0.5 H7 L3.5 4.5Z" fill="#111"/></svg><div class="t" style="right:639px;top:533px;font-size:7.6px;line-height:8px;color:#262626;text-align:right">color</div><div class="a" style="left:323px;top:531px;width:39px;height:9px;background:#fff"></div><div class="t" style="left:325px;top:533px;font-size:7.6px;line-height:8px;color:#222;">1</div><div class="a" style="left:362px;top:531px;width:10px;height:10px;background:#c2dcc2;border-left:1px solid #e8f4e8;border-right:1px solid #a8c4a8"></div><svg class="a" style="left:362px;top:531px" width="10" height="10"><path d="M1.5 8 Q3.8 8.2 4.3 5 Q4.8 2 7 2" stroke="#1e4a1e" stroke-width="1.2" fill="none"/><path d="M7 1.5 V9 M1.5 2.5 H3.2" stroke="#1e4a1e" stroke-width="1" fill="none"/></svg><div class="a" style="left:374px;top:531px;width:114px;height:10px;background:#e4e4e4"></div><div class="a" style="left:376px;top:532px;width:110px;height:3px;background:repeating-linear-gradient(to right,#aaa 0,#aaa 1px,transparent 1px,transparent 10px)"></div><div class="a" style="left:374px;top:535px;width:108px;height:3px;background:#0a0a0a"></div><div class="a" style="left:482px;top:531px;width:6px;height:10px;background:#ececec;border:1px solid #c0c0c0;border-top-color:#fafafa;border-left-color:#fafafa"></div><div class="a" style="left:489px;top:531px;width:10px;height:9px;background:#fff"></div><div class="t" style="left:491px;top:533px;font-size:7.6px;line-height:8px;color:#222;">4</div><div class="a" style="left:500px;top:531px;width:10px;height:10px;background:#fff"></div><svg class="a" style="left:510px;top:531px" width="10" height="10"><rect x="1" y="1" width="2" height="8" fill="#403a20"/><rect x="4" y="1" width="2" height="8" fill="#2a3a2a"/><rect x="7" y="1" width="2" height="8" fill="#1a2a40"/><path d="M0 3 H10 M0 6 H10" stroke="#ddd" stroke-width="0.8"/></svg><div class="a" style="left:324px;top:543px;width:8px;height:8px;background:#fff"></div><div class="t" style="left:334px;top:543px;font-size:7.6px;line-height:8px;color:#262626;">replace</div><div class="a" style="left:364px;top:543px;width:8px;height:8px;background:#fff"></div><div class="t" style="left:374px;top:543px;font-size:7.6px;line-height:8px;color:#262626;">invert</div><div class="a" style="left:398px;top:543px;width:8px;height:8px;background:#fff"></div><div class="t" style="left:408px;top:543px;font-size:7.6px;line-height:8px;color:#262626;">crop</div><div class="t" style="right:639px;top:553px;font-size:7.6px;line-height:8px;color:#262626;text-align:right">ramp</div><div class="a" style="left:323px;top:551px;width:48px;height:9px;background:#fff"></div>
<div class="t" style="left:325px;top:552px;font-size:8px;line-height:8px;color:#333;">linear</div>
<svg class="a" style="left:362px;top:553px" width="7" height="5"><path d="M0 0.5 H7 L3.5 4.5Z" fill="#111"/></svg><div class="t" style="right:639px;top:563px;font-size:7.6px;line-height:8px;color:#262626;text-align:right">blur</div><div class="a" style="left:323px;top:561px;width:36px;height:9px;background:#fff"></div><div class="t" style="left:325px;top:563px;font-size:7.6px;line-height:8px;color:#222;">0</div><div class="a" style="left:359px;top:561px;width:10px;height:10px;background:#c2dcc2;border-left:1px solid #e8f4e8;border-right:1px solid #a8c4a8"></div><svg class="a" style="left:359px;top:561px" width="10" height="10"><path d="M1.5 8 Q3.8 8.2 4.3 5 Q4.8 2 7 2" stroke="#1e4a1e" stroke-width="1.2" fill="none"/><path d="M7 1.5 V9 M1.5 2.5 H3.2" stroke="#1e4a1e" stroke-width="1" fill="none"/></svg><div class="a" style="left:371px;top:561px;width:107px;height:10px;background:#e4e4e4"></div><div class="a" style="left:373px;top:562px;width:103px;height:3px;background:repeating-linear-gradient(to right,#aaa 0,#aaa 1px,transparent 1px,transparent 10px)"></div><div class="a" style="left:371px;top:565px;width:50px;height:3px;background:#0a0a0a"></div><div class="a" style="left:427px;top:565px;width:51px;height:3px;background:#0a0a0a"></div><div class="a" style="left:421px;top:561px;width:6px;height:10px;background:#ececec;border:1px solid #c0c0c0;border-top-color:#fafafa;border-left-color:#fafafa"></div><div class="a" style="left:478px;top:561px;width:10px;height:9px;background:#fff"></div><div class="t" style="left:480px;top:563px;font-size:7.6px;line-height:8px;color:#222;">2</div><div class="t" style="right:639px;top:573px;font-size:7.6px;line-height:8px;color:#262626;text-align:right">animation</div><div class="a" style="left:323px;top:571px;width:10px;height:10px;background:#c2dcc2;border-left:1px solid #e8f4e8;border-right:1px solid #a8c4a8"></div><svg class="a" style="left:323px;top:571px" width="10" height="10"><path d="M1.5 8 Q3.8 8.2 4.3 5 Q4.8 2 7 2" stroke="#1e4a1e" stroke-width="1.2" fill="none"/><path d="M7 1.5 V9 M1.5 2.5 H3.2" stroke="#1e4a1e" stroke-width="1" fill="none"/></svg><svg class="a" style="left:334px;top:572px" width="9" height="9"><path d="M1 4.5 L3.5 7 L8 1.5" stroke="#111" stroke-width="1.5" fill="none"/></svg><div class="t" style="left:344px;top:573px;font-size:7.6px;line-height:8px;color:#262626;">autokey</div><svg class="a" style="left:374px;top:572px" width="9" height="9"><path d="M1 4.5 L3.5 7 L8 1.5" stroke="#111" stroke-width="1.5" fill="none"/></svg><div class="t" style="left:384px;top:573px;font-size:7.6px;line-height:8px;color:#262626;">linear interpolate</div><svg class="a" style="left:444px;top:572px" width="9" height="9"><path d="M1 4.5 L3.5 7 L8 1.5" stroke="#111" stroke-width="1.5" fill="none"/></svg><div class="t" style="left:455px;top:573px;font-size:7.6px;line-height:8px;color:#262626;">anamorphic</div><div class="a" style="left:497px;top:571px;width:10px;height:10px;background:#f4f4d8"></div><div class="t" style="left:499px;top:572px;font-size:8px;line-height:8px;color:#222;font-weight:bold">?</div><div class="a" style="left:277px;top:583px;width:245px;height:1px;background:#f4f4f4"></div><svg class="a" style="left:277px;top:583px" width="90" height="12"><path d="M2 11 V1 H29 L26 11 Z" fill="#e0e0e0" stroke="#b4b4b4" stroke-width="0.8"/><path d="M29 11 L32 1 H62 L59 11" fill="#dcdcdc" stroke="#b4b4b4" stroke-width="0.8"/><path d="M62 11 L65 1 H86 L83 11" fill="#dcdcdc" stroke="#b4b4b4" stroke-width="0.8"/></svg><div class="t" style="left:282px;top:585px;font-size:7.6px;line-height:8px;color:#333;">Bezier</div><div class="t" style="left:309px;top:585px;font-size:7.6px;line-height:8px;color:#333;">tracking</div><div class="t" style="left:342px;top:585px;font-size:7.6px;line-height:8px;color:#333;">Node</div><div class="a" style="left:365px;top:593px;width:38px;height:12px;background:linear-gradient(#f0f0f0,#e0e0e0);border:1px solid #bcbcbc;border-top-color:#f8f8f8;border-left-color:#f8f8f8;box-shadow:1px 1px 0 #c8c8c8"></div>
<div class="t" style="left:365px;top:595px;width:38px;text-align:center;font-size:7.8px;line-height:8px;color:#222">Cancel</div><div class="a" style="left:404px;top:593px;width:37px;height:12px;background:linear-gradient(#f0f0f0,#e0e0e0);border:1px solid #bcbcbc;border-top-color:#f8f8f8;border-left-color:#f8f8f8;box-shadow:1px 1px 0 #c8c8c8"></div>
<div class="t" style="left:404px;top:595px;width:37px;text-align:center;font-size:7.8px;line-height:8px;color:#b8b8b8">Undo</div><div class="a" style="left:443px;top:593px;width:37px;height:12px;background:linear-gradient(#f0f0f0,#e0e0e0);border:1px solid #bcbcbc;border-top-color:#f8f8f8;border-left-color:#f8f8f8;box-shadow:1px 1px 0 #c8c8c8"></div>
<div class="t" style="left:443px;top:595px;width:37px;text-align:center;font-size:7.8px;line-height:8px;color:#b8b8b8">Set</div><div class="a" style="left:483px;top:593px;width:37px;height:12px;background:linear-gradient(#f0f0f0,#e0e0e0);border:1px solid #bcbcbc;border-top-color:#f8f8f8;border-left-color:#f8f8f8;box-shadow:1px 1px 0 #c8c8c8"></div>
<div class="t" style="left:483px;top:595px;width:37px;text-align:center;font-size:7.8px;line-height:8px;color:#222">OK</div>
</body></html>
